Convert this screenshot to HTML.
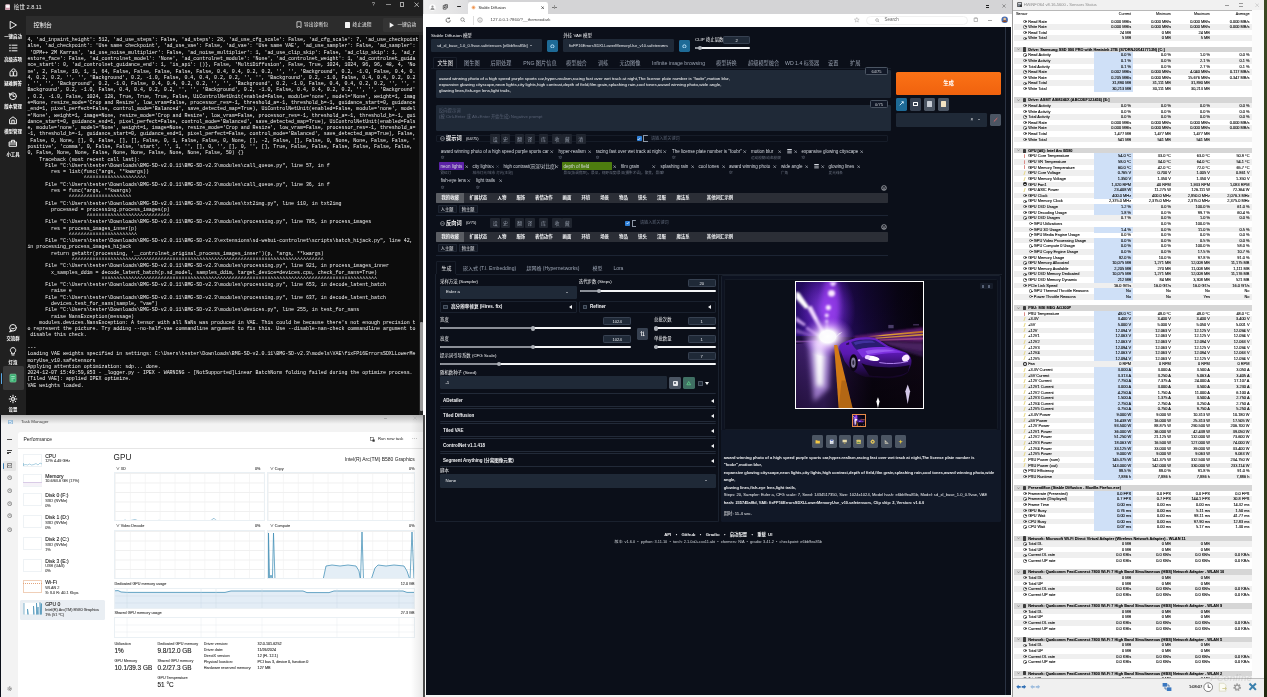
<!DOCTYPE html><html lang="zh"><head><meta charset="utf-8"><title>Desktop</title><style>
*{box-sizing:border-box;margin:0;padding:0}
html,body{width:1267px;height:697px;overflow:hidden;background:#0b0f19}
body{font-family:"Liberation Sans","Noto Sans CJK SC",sans-serif;position:relative;-webkit-font-smoothing:antialiased}
.abs,.abs>*{position:absolute}
#root{position:absolute;left:0;top:0;width:1267px;height:697px;overflow:hidden;will-change:transform;transform:translateZ(0)}
#root div,#root span,#root svg{position:absolute;white-space:nowrap}
.t{line-height:1}
/* launcher */
#lau{left:0;top:0;width:423.8px;height:414.5px;background:#202020;overflow:hidden}
#lau .tb{left:26px;top:16px;width:398px;height:18.7px;background:#2c2c2c}
#lau .con{left:26px;top:34.7px;width:393.4px;height:380px;background:#0c0c0c;overflow:hidden}
#lau pre{position:absolute;left:1.4px;top:2.5px;font-family:"Liberation Mono",monospace;font-size:4.95px;line-height:6.275px;color:#f4f4f4;white-space:pre;letter-spacing:0}
#lau .sl{font-size:4.4px;font-weight:bold;color:#fff;width:26px;left:0;text-align:center;line-height:5px}
#lau svg.si{left:8px;width:10px;height:10px}
/* task manager */
#tm{left:1px;top:414.5px;width:421.7px;height:283px;background:#f3f3f3;overflow:hidden;color:#1b1b1b}
#tm .pane{left:16.5px;top:17.5px;width:406px;height:270px;background:#fff;border-radius:3px 0 0 0}
#tm .it{font-size:5.05px;line-height:6px;color:#222;-webkit-text-stroke:0.1px #222}
#tm .is{font-size:3.85px;line-height:5px;color:#4a4a4a;-webkit-text-stroke:0.1px #4a4a4a}
#tm .gl{font-size:3.75px;line-height:5px;color:#444;-webkit-text-stroke:0.1px #444}
#tm .gbox{border:0.6px solid #eaf0f4;background:#fff;overflow:hidden}
/* browser */
#br{left:423px;top:0;width:589.5px;height:697px;background:#fff;overflow:hidden}
#pg{left:3px;top:26.7px;width:584.5px;height:668px;background:#0b0f19;overflow:hidden;color:#e5e7eb;font-size:4.6px}
#pg .blk{background:#1f2937;border-radius:1.2px}
#pg .lbl{font-size:4.4px;line-height:5px;color:#f3f4f6}
#pg .num{background:#1f2937;border-radius:1.2px;height:8px;font-size:4.2px;line-height:8px;text-align:center;color:#e5e7eb;border:0.4px solid #374151}
#pg .trk{height:2px;border-radius:1px;background:#f3f4f6}
#pg .trk i{position:absolute;left:0;top:0;height:2px;background:#8b8f97;border-radius:1px}
#pg .knob{width:4.4px;height:4.4px;border-radius:2.2px;background:#aeb2b9}
#pg .acc{left:17px;width:276px;height:13.4px;border-top:0.5px solid #222a38;border-bottom:0.5px solid #222a38;border-radius:1px}
#pg .acc b{position:absolute;left:3px;top:4px;font-size:4.5px;line-height:5px;color:#f3f4f6}
#pg .acc i{position:absolute;right:2.2px;top:4.2px;width:0;height:0;border-top:2px solid transparent;border-bottom:2px solid transparent;border-right:3px solid #f3f4f6}
#pg .tab{font-size:5.2px;line-height:6px;color:#9aa3b2;top:60px}
#pg .tag{font-size:4.5px;line-height:5px;color:#d6dae1}
#pg .tsub{font-size:3.6px;line-height:4px;color:#6b7280}
#pg .cat{font-size:4.4px;line-height:9.5px;color:#f3f4f6;font-weight:bold;text-align:center;top:0;height:9.5px}
#pg .sb{background:#262b36;border-radius:1px;height:10px;top:0;width:9.5px}
#pg .gbtn{top:408.8px;width:11.3px;height:12.3px;background:#4b5563;border-radius:1.4px}
/* hwinfo */
#hw{left:1012.3px;top:0;width:251.5px;height:697px;background:#fff;overflow:hidden;color:#000;font-size:3.92px;-webkit-text-stroke:0.09px #000}
#hw .row{left:1.3px;width:238.2px;height:5.62px}
#hw .row span{top:0;line-height:5.62px;height:5.62px}
#hw .row .n{left:14.6px}
#hw .row .v{text-align:right;width:40px}
#hw .g{background:#d6d6d6;font-weight:bold;font-size:3.87px;-webkit-text-stroke:0.08px #000}
#hw .o{background:#efefef}
#hw .hl{left:80.7px;top:0;width:38.4px;height:6.3px;background:#cfe0f7}
#hw .ic{left:9.8px;top:1.1px;width:3.3px;height:3.3px;border:0.55px solid #666;border-radius:50%}
#hw .ic:after{content:"";position:absolute;left:1.1px;top:0.2px;width:1.6px;height:0.5px;background:#444}
</style></head><body><div id="root"><div id="lau"><svg style="left:4.6px;top:3.6px;width:5.4px;height:6.6px" viewBox="0 0 10 12"><rect x="0.5" y="0.5" width="9" height="11" rx="2" fill="#e9c9d2"/><rect x="2" y="2.2" width="6" height="4" rx="1" fill="#fff"/><rect x="1" y="7.5" width="8" height="3" fill="#c98fa2"/></svg><span class="t" style="left:13.8px;top:5px;font-size:5.6px;color:#f0f0f0">绘世 2.8.11</span><span class="t" style="left:372px;top:1.8px;font-size:5.2px;color:#cfcfcf">?</span><div style="left:385.5px;top:4.4px;width:5px;height:0.6px;background:#8a8a8a"></div><div style="left:400px;top:2.4px;width:4.4px;height:4.4px;border:0.6px solid #a8a8a8"></div><svg style="left:414px;top:2px;width:5.4px;height:5.4px" viewBox="0 0 10 10"><path d="M1 1L9 9M9 1L1 9" stroke="#e8e8e8" stroke-width="1.3"/></svg><svg class="si" style="top:19.6px" viewBox="0 0 10 10"><path d="M2.5 1.5 L8.5 5 L2.5 8.5 Z" stroke="#f2f2f2" fill="none" stroke-width="1" stroke-linecap="round" stroke-linejoin="round"/></svg><span class="sl" style="top:33.7px">一键启动</span><svg class="si" style="top:43.2px" viewBox="0 0 10 10"><path d="M1.5 2.2h1M4 2.2h5M1.5 5h1M4 5h5M1.5 7.8h1M4 7.8h5" stroke="#f2f2f2" fill="none" stroke-width="1" stroke-linecap="round" stroke-linejoin="round" stroke-width="1.2"/></svg><span class="sl" style="top:56.7px">高级选项</span><svg class="si" style="top:67.0px" viewBox="0 0 10 10"><path d="M2 8.5V5.5a1.6 1.6 0 0 1 3.2 0V8.5ZM5.6 8.5V5.5a1.6 1.6 0 0 1 3.2 0V8.5ZM3.5 3.3A2.2 2.2 0 0 1 7.5 3" stroke="#f2f2f2" fill="none" stroke-width="1" stroke-linecap="round" stroke-linejoin="round"/></svg><span class="sl" style="top:80.5px">疑难解答</span><svg class="si" style="top:90.6px" viewBox="0 0 10 10"><circle cx="5" cy="5.2" r="3.4" stroke="#f2f2f2" fill="none" stroke-width="1" stroke-linecap="round" stroke-linejoin="round"/><path d="M5 3.3V5.4H6.6M1.3 2.2L1.9 4.2L3.8 3.6" stroke="#f2f2f2" fill="none" stroke-width="1" stroke-linecap="round" stroke-linejoin="round"/></svg><span class="sl" style="top:104.3px">版本管理</span><svg class="si" style="top:114.6px" viewBox="0 0 10 10"><path d="M1.6 8.3V4.4L5 1.8L8.4 4.4V8.3ZM3.8 8.3V5.2H6.2V8.3" stroke="#f2f2f2" fill="none" stroke-width="1" stroke-linecap="round" stroke-linejoin="round"/></svg><span class="sl" style="top:128.5px">模型管理</span><svg class="si" style="top:138.0px" viewBox="0 0 10 10"><path d="M1.5 4h7v4.3h-7ZM3.5 4V2.3h3V4M1.5 6h7" stroke="#f2f2f2" fill="none" stroke-width="1" stroke-linecap="round" stroke-linejoin="round"/></svg><span class="sl" style="top:152.1px">小工具</span><svg class="si" style="top:322.5px" viewBox="0 0 10 10"><circle cx="5" cy="4.8" r="3.3" stroke="#f2f2f2" fill="none" stroke-width="1" stroke-linecap="round" stroke-linejoin="round"/><path d="M2.6 7.2L1.6 9L4 8" stroke="#f2f2f2" fill="none" stroke-width="1" stroke-linecap="round" stroke-linejoin="round"/><path d="M3.6 5.4q1.4 1.2 2.8 0" stroke="#f2f2f2" fill="none" stroke-width="1" stroke-linecap="round" stroke-linejoin="round" stroke-width="0.8"/></svg><span class="sl" style="top:335.6px">交流群</span><svg class="si" style="top:346.0px" viewBox="0 0 10 10"><path d="M3.6 6.6A2.7 2.7 0 1 1 6.4 6.6V7.8H3.6ZM4 9h2" stroke="#f2f2f2" fill="none" stroke-width="1" stroke-linecap="round" stroke-linejoin="round"/></svg><span class="sl" style="top:359.6px">灯泡</span><div style="left:2.6px;top:366px;width:21.4px;height:24px;background:#3a3a3a;border-radius:1.6px"></div><div style="left:0.8px;top:372.5px;width:1.1px;height:11px;background:#5aa9e6;border-radius:1px"></div><svg class="si" style="top:372.6px" viewBox="0 0 10 10"><rect x="2" y="1.2" width="6" height="7.8" rx="0.8" fill="#2fa86a" stroke="#7fe0a8" stroke-width="0.7"/><path d="M3.2 3.4h3.6M3.2 5.2h3.6M3.2 7h2.2" stroke="#d8ffe9" stroke-width="0.7"/></svg><svg class="si" style="top:394.0px" viewBox="0 0 10 10"><circle cx="5" cy="5" r="1.5" stroke="#f2f2f2" fill="none" stroke-width="1" stroke-linecap="round" stroke-linejoin="round"/><path d="M5 1.2V2.4M5 7.6V8.8M1.2 5H2.4M7.6 5H8.8M2.3 2.3L3.2 3.2M6.8 6.8L7.7 7.7M7.7 2.3L6.8 3.2M3.2 6.8L2.3 7.7" stroke="#f2f2f2" fill="none" stroke-width="1" stroke-linecap="round" stroke-linejoin="round" stroke-width="1.3"/></svg><span class="sl" style="top:407.2px">设置</span><div class="tb"><span class="t" style="left:7.5px;top:5.6px;font-size:6.2px;color:#f5f5f5">控制台</span><svg style="left:270px;top:5px;width:6px;height:7.4px" viewBox="0 0 8 10"><path d="M1.2 1h5.6v8L4 7.2L1.2 9Z" fill="none" stroke="#eee" stroke-width="1"/></svg><span class="t" style="left:278px;top:6.5px;font-size:4.8px;color:#f0f0f0">导出诊断包</span><div style="left:318.6px;top:6.3px;width:5.2px;height:5.6px;background:#f3f3f3;border-radius:0.5px"></div><span class="t" style="left:326.4px;top:6.5px;font-size:4.8px;color:#f0f0f0">终止进程</span><div style="left:357px;top:2.2px;width:40px;height:14px;background:#343434;border-radius:1.4px"></div><svg style="left:362.6px;top:6px;width:5.6px;height:6.4px" viewBox="0 0 8 9"><path d="M1 0.8L7.2 4.5L1 8.2Z" fill="#f3f3f3"/></svg><span class="t" style="left:371.4px;top:6.5px;font-size:4.7px;color:#f0f0f0">一键启动</span></div><div class="con"><pre>4, 'ad_inpaint_height': 512, 'ad_use_steps': False, 'ad_steps': 28, 'ad_use_cfg_scale': False, 'ad_cfg_scale': 7, 'ad_use_checkpoint': F
alse, 'ad_checkpoint': 'Use same checkpoint', 'ad_use_vae': False, 'ad_vae': 'Use same VAE', 'ad_use_sampler': False, 'ad_sampler':
 'DPM++ 2M Karras', 'ad_use_noise_multiplier': False, 'ad_noise_multiplier': 1, 'ad_use_clip_skip': False, 'ad_clip_skip': 1, 'ad_r
estore_face': False, 'ad_controlnet_model': 'None', 'ad_controlnet_module': 'None', 'ad_controlnet_weight': 1, 'ad_controlnet_guida
nce_start': 0, 'ad_controlnet_guidance_end': 1, 'is_api': ()}, False, 'MultiDiffusion', False, True, 1024, 1024, 96, 96, 48, 4, 'No
ne', 2, False, 10, 1, 1, 64, False, False, False, False, False, 0.4, 0.4, 0.2, 0.2, '', '', 'Background', 0.2, -1.0, False, 0.4, 0.
4, 0.2, 0.2, '', '', 'Background', 0.2, -1.0, False, 0.4, 0.4, 0.2, 0.2, '', '', 'Background', 0.2, -1.0, False, 0.4, 0.4, 0.2, 0.2
, '', '', 'Background', 0.2, -1.0, False, 0.4, 0.4, 0.2, 0.2, '', '', 'Background', 0.2, -1.0, False, 0.4, 0.4, 0.2, 0.2, '', '', '
Background', 0.2, -1.0, False, 0.4, 0.4, 0.2, 0.2, '', '', 'Background', 0.2, -1.0, False, 0.4, 0.4, 0.2, 0.2, '', '', 'Background'
, 0.2, -1.0, False, 1024, 128, True, True, True, False, UiControlNetUnit(enabled=False, module='none', model='None', weight=1, imag
e=None, resize_mode='Crop and Resize', low_vram=False, processor_res=-1, threshold_a=-1, threshold_b=-1, guidance_start=0, guidance
_end=1, pixel_perfect=False, control_mode='Balanced', save_detected_map=True), UiControlNetUnit(enabled=False, module='none', model
='None', weight=1, image=None, resize_mode='Crop and Resize', low_vram=False, processor_res=-1, threshold_a=-1, threshold_b=-1, gui
dance_start=0, guidance_end=1, pixel_perfect=False, control_mode='Balanced', save_detected_map=True), UiControlNetUnit(enabled=Fals
e, module='none', model='None', weight=1, image=None, resize_mode='Crop and Resize', low_vram=False, processor_res=-1, threshold_a=
-1, threshold_b=-1, guidance_start=0, guidance_end=1, pixel_perfect=False, control_mode='Balanced', save_detected_map=True), False,
 False, 0, None, [], 0, False, [], [], False, 0, 1, False, False, 0, None, [], -2, False, [], False, 0, None, None, False, False, '
positive', 'comma', 0, False, False, 'start', '', 1, '', [], 0, '', [], 0, '', [], True, False, False, False, False, False, False,
0, False, None, None, False, None, None, False, None, None, False, 50) {}
    Traceback (most recent call last):
      File "C:\Users\tester\Downloads\BMG-SD-v2.0.11\BMG-SD-v2.3\modules\call_queue.py", line 57, in f
        res = list(func(*args, **kwargs))
                   ^^^^^^^^^^^^^^^^^^^^^
      File "C:\Users\tester\Downloads\BMG-SD-v2.0.11\BMG-SD-v2.3\modules\call_queue.py", line 36, in f
        res = func(*args, **kwargs)
              ^^^^^^^^^^^^^^^^^^^^^
      File "C:\Users\tester\Downloads\BMG-SD-v2.0.11\BMG-SD-v2.3\modules\txt2img.py", line 110, in txt2img
        processed = processing.process_images(p)
                    ^^^^^^^^^^^^^^^^^^^^^^^^^^^^
      File "C:\Users\tester\Downloads\BMG-SD-v2.0.11\BMG-SD-v2.3\modules\processing.py", line 785, in process_images
        res = process_images_inner(p)
              ^^^^^^^^^^^^^^^^^^^^^^^
      File "C:\Users\tester\Downloads\BMG-SD-v2.0.11\BMG-SD-v2.3\extensions\sd-webui-controlnet\scripts\batch_hijack.py", line 42,
in processing_process_images_hijack
        return getattr(processing, '__controlnet_original_process_images_inner')(p, *args, **kwargs)
               ^^^^^^^^^^^^^^^^^^^^^^^^^^^^^^^^^^^^^^^^^^^^^^^^^^^^^^^^^^^^^^^^^^^^^^^^^^^^^^^^^^^^^
      File "C:\Users\tester\Downloads\BMG-SD-v2.0.11\BMG-SD-v2.3\modules\processing.py", line 921, in process_images_inner
        x_samples_ddim = decode_latent_batch(p.sd_model, samples_ddim, target_device=devices.cpu, check_for_nans=True)
                         ^^^^^^^^^^^^^^^^^^^^^^^^^^^^^^^^^^^^^^^^^^^^^^^^^^^^^^^^^^^^^^^^^^^^^^^^^^^^^^^^^^^^^^^^^^^^^
      File "C:\Users\tester\Downloads\BMG-SD-v2.0.11\BMG-SD-v2.3\modules\processing.py", line 653, in decode_latent_batch
        raise e
      File "C:\Users\tester\Downloads\BMG-SD-v2.0.11\BMG-SD-v2.3\modules\processing.py", line 637, in decode_latent_batch
        devices.test_for_nans(sample, "vae")
      File "C:\Users\tester\Downloads\BMG-SD-v2.0.11\BMG-SD-v2.3\modules\devices.py", line 255, in test_for_nans
        raise NansException(message)
    modules.devices.NansException: A tensor with all NaNs was produced in VAE. This could be because there's not enough precision t
o represent the picture. Try adding --no-half-vae commandline argument to fix this. Use --disable-nan-check commandline argument to
 disable this check.

---
Loading VAE weights specified in settings: C:\Users\tester\Downloads\BMG-SD-v2.0.11\BMG-SD-v2.3\models\VAE\fixFP16ErrorsSDXLLowerMe
moryUse_v10.safetensors
Applying attention optimization: sdp... done.
2024-12-07 15:49:59,853 - _logger.py - IPEX - WARNING - [NotSupported]Linear BatchNorm folding failed during the optimize process.
[Tiled VAE]: applied IPEX optimize.
VAE weights loaded.</pre></div><div style="left:419.4px;top:34.7px;width:4.4px;height:380px;background:#222"></div><div style="left:420.4px;top:322px;width:2.6px;height:89px;background:#9a9a9a;border-radius:1px"></div></div><div id="tm"><div class="pane"></div><div style="left:0;top:0;width:422px;height:9px;background:linear-gradient(#b9b9b9,rgba(240,240,240,0))"></div><svg style="left:6.5px;top:5.0px;width:5px;height:4.4px" viewBox="0 0 10 9"><rect x="0.5" y="0.5" width="9" height="8" rx="1" fill="#d9e9f7" stroke="#3b7fb5" stroke-width="1"/><path d="M1.5 6L3.5 4L5 5.5L8 2.5" stroke="#3b7fb5" fill="none" stroke-width="1"/></svg><span class="t " style="left:20.0px;top:5.5px;font-size:4.4px;color:#444">Task Manager</span><div style="left:382.6px;top:3.9px;width:3.6px;height:0.5px;background:#aaa"></div><svg style="left:412.4px;top:1.9px;width:4px;height:4px" viewBox="0 0 10 10"><path d="M1 1L9 9M9 1L1 9" stroke="#aaa" stroke-width="1"/></svg><div style="left:6.0px;top:24.0px;width:4.6px;height:0.6px;background:#555"></div><div style="left:6.0px;top:35.4px;width:4.6px;height:0.6px;background:#444"></div><div style="left:6.0px;top:37.0px;width:3.6px;height:0.6px;background:#444"></div><div style="left:6.0px;top:38.6px;width:2.4px;height:0.6px;background:#444"></div><div style="left:2.0px;top:46.5px;width:13.0px;height:10.0px;background:#e6e6e6;border-radius:1.5px"></div><div style="left:2.0px;top:48.5px;width:0.9px;height:5.5px;background:#3b7fb5;border-radius:1px"></div><svg style="left:6.0px;top:48.5px;width:5.4px;height:5.4px" viewBox="0 0 10 10"><path d="M1 1h8v8h-8zM1 6.5L3.5 4L5.5 6L9 2.5" fill="none" stroke="#333" stroke-width="1"/></svg><svg style="left:5.8px;top:60.3px;width:5.4px;height:5.4px" viewBox="0 0 10 10"><circle cx="5" cy="5" r="3.6" fill="none" stroke="#444" stroke-width="1"/><path d="M5 3v2.2h1.6" fill="none" stroke="#444" stroke-width="0.9"/></svg><svg style="left:5.8px;top:73.3px;width:5.4px;height:5.4px" viewBox="0 0 10 10"><circle cx="5" cy="5" r="3.6" fill="none" stroke="#444" stroke-width="1"/><path d="M5 3v2.2h1.6" fill="none" stroke="#444" stroke-width="0.9"/></svg><svg style="left:5.8px;top:86.3px;width:5.4px;height:5.4px" viewBox="0 0 10 10"><circle cx="5" cy="5" r="3.6" fill="none" stroke="#444" stroke-width="1"/><path d="M5 3v2.2h1.6" fill="none" stroke="#444" stroke-width="0.9"/></svg><svg style="left:5.8px;top:98.3px;width:5.4px;height:5.4px" viewBox="0 0 10 10"><circle cx="5" cy="5" r="3.6" fill="none" stroke="#444" stroke-width="1"/><path d="M5 3v2.2h1.6" fill="none" stroke="#444" stroke-width="0.9"/></svg><svg style="left:5.8px;top:112.3px;width:5.4px;height:5.4px" viewBox="0 0 10 10"><circle cx="5" cy="5" r="3.6" fill="none" stroke="#444" stroke-width="1"/><path d="M5 3v2.2h1.6" fill="none" stroke="#444" stroke-width="0.9"/></svg><svg style="left:5.5px;top:271.0px;width:5.4px;height:5.4px" viewBox="0 0 10 10"><circle cx="5" cy="5" r="1.6" fill="none" stroke="#444" stroke-width="1"/><circle cx="5" cy="5" r="3.6" fill="none" stroke="#444" stroke-width="1.1" stroke-dasharray="1.6 1.2"/></svg><span class="t " style="left:22.5px;top:22.5px;font-size:5px;color:#1a1a1a">Performance</span><div style="left:17.0px;top:33.0px;width:405.0px;height:0.5px;background:#e6e6e6"></div><svg style="left:369.0px;top:22.3px;width:5px;height:5px" viewBox="0 0 10 10"><rect x="1" y="1" width="6" height="6" fill="none" stroke="#333" stroke-width="1"/><rect x="5" y="5" width="4.4" height="4.4" fill="#333"/></svg><span class="t " style="left:377.0px;top:22.9px;font-size:4.2px;color:#222">Run new task</span><span class="t " style="left:411.0px;top:21.1px;font-size:5px;color:#222;letter-spacing:0.2px">···</span><div style="left:21.5px;top:39.3px;width:19.5px;height:13.0px;border:0.5px solid #eef2f5;background:#fff"></div><svg style="left:21.5px;top:39.3px;width:19.5px;height:13px" viewBox="0 0 39 26"><path d="M1 18V24M1 22L6 21L9 22L13 20L17 22L22 21L26 19L30 22L34 18L38 20" fill="none" stroke="#4a9ac0" stroke-width="0.9"/></svg><span class="t it" style="left:44.2px;top:38.5px;">CPU</span><span class="t is" style="left:44.2px;top:44.7px;">12% 4.49 GHz</span><div style="left:21.5px;top:59.0px;width:19.5px;height:13.0px;border:0.5px solid #eef2f5;background:#fff"></div><div style="left:21.7px;top:67.2px;width:19.0px;height:4.6px;background:#f5f1f8"></div><div style="left:21.7px;top:67.0px;width:19.0px;height:0.5px;background:#d9cbe6"></div><span class="t it" style="left:44.2px;top:58.2px;">Memory</span><span class="t is" style="left:44.2px;top:64.4px;">10.6/63.6 GB (17%)</span><div style="left:21.5px;top:78.7px;width:19.5px;height:13.0px;border:0.5px solid #eef2f5;background:#fff"></div><span class="t it" style="left:44.2px;top:77.9px;">Disk 0 (F:)</span><span class="t is" style="left:44.2px;top:84.1px;">SSD (NVMe)</span><span class="t is" style="left:44.2px;top:89.5px;">0%</span><div style="left:21.5px;top:100.6px;width:19.5px;height:13.0px;border:0.5px solid #eef2f5;background:#fff"></div><span class="t it" style="left:44.2px;top:99.8px;">Disk 1 (D:)</span><span class="t is" style="left:44.2px;top:106.0px;">SSD (NVMe)</span><span class="t is" style="left:44.2px;top:111.4px;">0%</span><div style="left:21.5px;top:122.6px;width:19.5px;height:13.0px;border:0.5px solid #eef2f5;background:#fff"></div><span class="t it" style="left:44.2px;top:121.8px;">Disk 2 (C:)</span><span class="t is" style="left:44.2px;top:128.0px;">SSD (NVMe)</span><span class="t is" style="left:44.2px;top:133.4px;">1%</span><div style="left:21.5px;top:144.1px;width:19.5px;height:13.0px;border:0.5px solid #eef2f5;background:#fff"></div><span class="t it" style="left:44.2px;top:143.3px;">Disk 3 (E:)</span><span class="t is" style="left:44.2px;top:149.5px;">USB (UAS)</span><span class="t is" style="left:44.2px;top:154.9px;">0%</span><div style="left:21.5px;top:165.7px;width:19.5px;height:13.0px;border:0.5px solid #f0cfb8;background:#fff"></div><div style="left:22.0px;top:168.7px;width:18.5px;height:0.5px;background:repeating-linear-gradient(90deg,#e2a47c 0 1px,transparent 1px 2px)"></div><span class="t it" style="left:44.2px;top:164.9px;">Wi-Fi</span><span class="t is" style="left:44.2px;top:171.1px;">WLAN 2</span><span class="t is" style="left:44.2px;top:176.5px;">S: 8.0 R: 40.1 Kbps</span><div style="left:19.0px;top:185.1px;width:84.5px;height:20.0px;background:#e9eef3;border-radius:1.5px"></div><div style="left:21.5px;top:187.7px;width:19.5px;height:13.0px;border:0.5px solid #eef2f5;background:#fff"></div><svg style="left:21.5px;top:187.7px;width:19.5px;height:13px" viewBox="0 0 39 26"><path d="M2 25V2M9 25V14L11 25M21 25V8L22.5 25M27 25V2L28.5 25L30 10L31 25M34 25V1L35.5 25L37 3V25" fill="none" stroke="#3f8db5" stroke-width="1.3"/></svg><span class="t it" style="left:44.2px;top:186.9px;">GPU 0</span><span class="t is" style="left:44.2px;top:193.1px;">Intel(R) Arc(TM) B580 Graphics</span><span class="t is" style="left:44.2px;top:198.5px;">1% (51 °C)</span><span class="t " style="left:112.6px;top:39.1px;font-size:8.2px;color:#1a1a1a">GPU</span><span class="t" style="right:7.9px;top:42.5px;font-size:5px;color:#1a1a1a">Intel(R) Arc(TM) B580 Graphics</span><span class="t gl" style="left:115.0px;top:52.1px;">∨ 3D</span><span class="t gl" style="left:254.0px;top:52.1px;">0%</span><span class="t gl" style="left:269.0px;top:52.1px;">∨ Copy</span><span class="t gl" style="right:8.2px;top:52.1px">0%</span><div class="gbox" style="left:113.0px;top:57.7px;width:150.6px;height:49.3px;background-image:linear-gradient(#f0f0f0 0.5px,transparent 0.5px),linear-gradient(90deg,#f6f6f6 0.5px,transparent 0.5px);background-size:14.9px 9.5px,14.9px 9.5px;"><svg style="left:0;top:0;width:150px;height:49px" viewBox="0 0 150 49"><path d="M8 48L10 47L13 48L20 46.6L24 48L40 48L44 47.3L48 48L58 47.6L92 48L96 47.4L99 45.2L101 47.3L104 48" fill="none" stroke="#5b9dc0" stroke-width="0.6"/></svg></div><div class="gbox" style="left:266.0px;top:57.7px;width:148.0px;height:49.3px;background-image:linear-gradient(#f0f0f0 0.5px,transparent 0.5px),linear-gradient(90deg,#f6f6f6 0.5px,transparent 0.5px);background-size:14.9px 9.5px,14.9px 9.5px;"><svg style="left:0;top:0;width:148px;height:49px" viewBox="0 0 148 49"><path d="M16 48h4M54 48h6M104 48h5" fill="none" stroke="#5b9dc0" stroke-width="0.7"/></svg></div><span class="t gl" style="left:115.0px;top:109.1px;">∨ Video Decode</span><span class="t gl" style="left:254.0px;top:109.1px;">0%</span><span class="t gl" style="left:269.0px;top:109.1px;">∨ Compute</span><span class="t gl" style="right:8.2px;top:109.1px">0%</span><div class="gbox" style="left:113.0px;top:115.1px;width:150.6px;height:49.3px;background-image:linear-gradient(#f0f0f0 0.5px,transparent 0.5px),linear-gradient(90deg,#f6f6f6 0.5px,transparent 0.5px);background-size:14.9px 9.5px,14.9px 9.5px;"></div><div class="gbox" style="left:266.0px;top:115.1px;width:148.0px;height:49.3px;background-image:linear-gradient(#f0f0f0 0.5px,transparent 0.5px),linear-gradient(90deg,#f6f6f6 0.5px,transparent 0.5px);background-size:14.9px 9.5px,14.9px 9.5px;"><svg style="left:0;top:0;width:148px;height:49px" viewBox="0 0 148 49"><path d="M55 49L58 35L64 34L72 35L80 34L88 35L91 40L93 49ZM103 49L107 37L110 34L118 35L126 34L136 35L139 40L142 49Z" fill="#e4eef6"/><path d="M0.5 49V2L1.6 49L3 44L4.4 49L5.5 2L7 49M55 49L58 35L64 34L72 35L80 34L88 35L91 40L92.5 49L94 1L95.5 49M103 49L107 37L110 34L118 35L126 34L136 35L139 40L142 49L144 1L146 49" fill="none" stroke="#3f8db5" stroke-width="0.75"/></svg></div><span class="t gl" style="left:113.5px;top:167.5px;">Dedicated GPU memory usage</span><span class="t gl" style="right:8.2px;top:167.5px">12.0 GB</span><div class="gbox" style="left:113.0px;top:173.5px;width:301.0px;height:20.6px;"><svg style="left:0;top:0;width:301px;height:20.6px" viewBox="0 0 301 20.6"><path d="M0 20.6V1.8L3 1.6L6 3L12 3.4L60 3.4L110 3.4L116 2L188 2L192 3.6L214 3.6L219 2L288 2L292 3.4L301 3.4V20.6Z" fill="#e3edf6"/><path d="M0 1.8L3 1.6L6 3L12 3.4L60 3.4L110 3.4L116 2L188 2L192 3.6L214 3.6L219 2L288 2L292 3.4L301 3.4" fill="none" stroke="#3f8db5" stroke-width="0.8"/><path d="M12 0V20.6M86 0V20.6M101 0V20.6M147 0V20.6M222 0V20.6M284 0V20.6M0 7h301M0 14h301" stroke="#c9d9e6" stroke-width="0.4"/></svg></div><span class="t gl" style="left:113.5px;top:196.5px;">Shared GPU memory usage</span><span class="t gl" style="right:8.2px;top:196.5px">27.3 GB</span><div class="gbox" style="left:113.0px;top:202.0px;width:301.0px;height:21.7px;"><svg style="left:0;top:0;width:301px;height:21.6px" viewBox="0 0 301 21.6"><path d="M12 0V21.6M86 0V21.6M101 0V21.6M147 0V21.6M222 0V21.6M284 0V21.6M0 7h301M0 14h301" stroke="#e3e9ee" stroke-width="0.4"/><path d="M2 20.8h8M184 20.8h10M286 20.8h8" stroke="#5b9dc0" stroke-width="0.6"/></svg></div><span class="t gl" style="left:113.5px;top:227.7px;">Utilization</span><span class="t " style="left:113.5px;top:233.1px;font-size:6.4px;color:#1a1a1a;-webkit-text-stroke:0.12px #1a1a1a">1%</span><span class="t gl" style="left:156.5px;top:227.7px;">Dedicated GPU memory</span><span class="t " style="left:156.5px;top:233.1px;font-size:6.4px;color:#1a1a1a;-webkit-text-stroke:0.12px #1a1a1a">9.8/12.0 GB</span><span class="t gl" style="left:113.5px;top:244.7px;">GPU Memory</span><span class="t " style="left:113.5px;top:250.1px;font-size:6.4px;color:#1a1a1a;-webkit-text-stroke:0.12px #1a1a1a">10.1/39.3 GB</span><span class="t gl" style="left:156.5px;top:244.7px;">Shared GPU memory</span><span class="t " style="left:156.5px;top:250.1px;font-size:6.4px;color:#1a1a1a;-webkit-text-stroke:0.12px #1a1a1a">0.2/27.3 GB</span><span class="t gl" style="left:156.5px;top:261.7px;">GPU Temperature</span><span class="t " style="left:156.5px;top:267.1px;font-size:6.4px;color:#1a1a1a;-webkit-text-stroke:0.12px #1a1a1a">51 °C</span><span class="t gl" style="left:202.8px;top:227.7px;">Driver version:</span><span class="t gl" style="left:256.6px;top:227.7px;color:#1a1a1a">32.0.101.6252</span><span class="t gl" style="left:202.8px;top:233.8px;">Driver date:</span><span class="t gl" style="left:256.6px;top:233.8px;color:#1a1a1a">11/26/2024</span><span class="t gl" style="left:202.8px;top:239.8px;">DirectX version:</span><span class="t gl" style="left:256.6px;top:239.8px;color:#1a1a1a">12 (FL 12.1)</span><span class="t gl" style="left:202.8px;top:245.9px;">Physical location:</span><span class="t gl" style="left:256.6px;top:245.9px;color:#1a1a1a">PCI bus 3, device 0, function 0</span><span class="t gl" style="left:202.8px;top:251.9px;">Hardware reserved memory:</span><span class="t gl" style="left:256.6px;top:251.9px;color:#1a1a1a">127 MB</span><div style="left:410px;top:0;width:12px;height:283px;background:linear-gradient(90deg,rgba(0,0,0,0),rgba(0,0,0,0.09))"></div></div><div id="br"><div style="left:0.0px;top:0.0px;width:590.0px;height:13.6px;background:#d4d4d6"></div><div style="left:0.8px;top:0.0px;width:44.4px;height:13.6px;background:linear-gradient(90deg,#efefef,#dedee0)"></div><svg style="left:5.6px;top:3.6px;width:7px;height:7px" viewBox="0 0 10 10"><circle cx="5" cy="5" r="4.6" fill="#fff"/><circle cx="5" cy="3.8" r="1.6" fill="#9a9a9a"/><path d="M2 8.4a3 3 0 0 1 6 0Z" fill="#9a9a9a"/></svg><svg style="left:18.6px;top:4px;width:6.4px;height:6.4px" viewBox="0 0 10 10"><path d="M2 2.5h4.5v5.5H2zM4 1h4.5v5.5" fill="none" stroke="#333" stroke-width="1.1"/><circle cx="4.3" cy="5.2" r="1.2" fill="#333"/></svg><div style="left:34.0px;top:5.6px;width:4.4px;height:1.4px;background:#222;border-radius:0.6px"></div><div style="left:45.0px;top:1.8px;width:80.0px;height:11.8px;background:#fff;border-radius:2.4px 2.4px 0 0"></div><svg style="left:48.0px;top:5px;width:5px;height:5px" viewBox="0 0 10 10"><circle cx="5" cy="5" r="4" fill="#f6c9a8"/><circle cx="5" cy="5" r="2" fill="#f08a3c"/></svg><span class="t" style="left:55.6px;top:5.6px;font-size:3.9px;color:#222">Stable Diffusion</span><svg style="left:117.6px;top:6px;width:3.4px;height:3.4px" viewBox="0 0 10 10"><path d="M1 1L9 9M9 1L1 9" stroke="#222" stroke-width="1.8"/></svg><div style="left:129.0px;top:7.0px;width:4.6px;height:0.6px;background:#777"></div><div style="left:130.9px;top:4.9px;width:0.6px;height:4.6px;background:#999"></div><div style="left:562.6px;top:4.6px;width:3.6px;height:0.8px;background:#222"></div><div style="left:562.6px;top:6.6px;width:3.6px;height:0.8px;background:#222"></div><svg style="left:579.0px;top:4.4px;width:4px;height:4px" viewBox="0 0 10 10"><path d="M1 1L9 9M9 1L1 9" stroke="#555" stroke-width="1.3"/></svg><div style="left:1.3px;top:13.6px;width:588.0px;height:13.2px;background:#fff"></div><svg style="left:22.4px;top:16.6px;width:6.4px;height:6.4px" viewBox="0 0 10 10"><path d="M8.3 5A3.3 3.3 0 1 1 7 2.4M7 0.8V2.6H5.2" fill="none" stroke="#333" stroke-width="1"/></svg><svg style="left:37.0px;top:17.4px;width:5.6px;height:5.6px" viewBox="0 0 10 10"><circle cx="4.4" cy="4.4" r="3" fill="none" stroke="#555" stroke-width="1"/><path d="M6.6 6.6L9 9" stroke="#555" stroke-width="1.1"/></svg><div style="left:49.5px;top:15.6px;width:0.4px;height:9.0px;background:#ddd"></div><svg style="left:54.4px;top:17px;width:6px;height:6px" viewBox="0 0 10 10"><circle cx="5" cy="5" r="3.8" fill="none" stroke="#777" stroke-width="0.9"/><path d="M5 4.4V7.2M5 2.8V3.4" stroke="#777" stroke-width="1"/></svg><span class="t" style="left:67.6px;top:18px;font-size:4.3px;color:#444">127.0.0.1:7860/?__theme=dark</span><svg style="left:431.0px;top:17.4px;width:5.6px;height:5.6px" viewBox="0 0 10 10"><path d="M5 1L6.2 3.8L9.2 4L6.9 6L7.6 9L5 7.4L2.4 9L3.1 6L0.8 4L3.8 3.8Z" fill="none" stroke="#999" stroke-width="0.8"/></svg><div style="left:443.0px;top:15.6px;width:102.0px;height:9.6px;border:0.5px solid #f0f0f0;border-radius:5px;background:#fff"></div><svg style="left:452.0px;top:18px;width:4.6px;height:4.6px" viewBox="0 0 10 10"><circle cx="4.4" cy="4.4" r="3" fill="none" stroke="#777" stroke-width="1"/><path d="M6.6 6.6L9 9" stroke="#777" stroke-width="1.1"/></svg><span class="t" style="left:461.4px;top:18px;font-size:4.5px;color:#666">Search</span><svg style="left:550.0px;top:17.4px;width:5.6px;height:5.6px" viewBox="0 0 10 10"><path d="M2 2h6v6h-6zM4 0.8v2M6 0.8v2" fill="none" stroke="#777" stroke-width="0.9"/></svg><div style="left:565.0px;top:20.0px;width:4.4px;height:0.6px;background:#aaa"></div><svg style="left:577.6px;top:16.4px;width:7.4px;height:7.4px" viewBox="0 0 10 10"><circle cx="5" cy="5" r="4.4" fill="#4a6fb3"/><circle cx="5" cy="4" r="1.8" fill="#f1c38b"/><path d="M1.6 8a3.6 3.6 0 0 1 6.8 0Z" fill="#8f4b2a"/></svg><div style="left:587.4px;top:26.7px;width:2.2px;height:671.0px;background:#fff"></div><div style="left:0.0px;top:694.6px;width:590.0px;height:2.4px;background:#f4f4f4"></div><div style="left:0.0px;top:414.5px;width:1.5px;height:283.0px;background:#4a4a4a"></div><div id="pg"><div style="left:579.4px;top:0.0px;width:0.5px;height:668.0px;background:#2a3242"></div><span class="t lbl" style="left:5.0px;top:5.9px;">Stable Diffusion 模型</span><div class="blk" style="left:5.0px;top:12.8px;width:111.0px;height:12.2px;"></div><span class="t " style="left:11.0px;top:16.9px;font-size:4.05px;color:#e5e7eb">sd_xl_base_1.0_0.9vae.safetensors [e6bb9ea85b]</span><div style="left:104.4px;top:18.3px;width:0;height:0;border-left:1.3px solid transparent;border-right:1.3px solid transparent;border-top:1.7px solid #e5e7eb"></div><div style="left:121.0px;top:13.3px;width:11.4px;height:12.0px;background:#1e6a96;border-radius:1.4px"><svg style="left:3.4px;top:3.6px;width:4.8px;height:4.8px" viewBox="0 0 10 10"><circle cx="5" cy="5" r="3.3" fill="none" stroke="#bfe6ff" stroke-width="2"/></svg></div><span class="t lbl" style="left:137.4px;top:5.9px;">外挂 VAE 模型</span><div class="blk" style="left:137.3px;top:12.8px;width:110.3px;height:12.2px;"></div><span class="t " style="left:143.0px;top:16.9px;font-size:4.05px;color:#e5e7eb">fixFP16ErrorsSDXLLowerMemoryUse_v10.safetensors</span><div style="left:236.0px;top:18.3px;width:0;height:0;border-left:1.3px solid transparent;border-right:1.3px solid transparent;border-top:1.7px solid #e5e7eb"></div><div style="left:252.6px;top:13.3px;width:11.4px;height:12.0px;background:#1e6a96;border-radius:1.4px"><svg style="left:3.4px;top:3.6px;width:4.8px;height:4.8px" viewBox="0 0 10 10"><circle cx="5" cy="5" r="3.3" fill="none" stroke="#bfe6ff" stroke-width="2"/></svg></div><span class="t lbl" style="left:269.0px;top:9.9px;">CLIP 终止层数</span><div class="num" style="left:297.4px;top:8.9px;width:26.6px;height:8.0px;">2</div><div class="trk" style="left:269.0px;top:20.1px;width:55.0px;height:2.0px;"><i style="width:5.0px"></i></div><div class="knob" style="left:271.8px;top:18.9px;width:4.4px;height:4.4px;"></div><div style="left:6.6px;top:30.3px;width:24.6px;height:11.0px;border:0.5px solid #181e2a;border-bottom:none;border-radius:1.4px 1.4px 0 0"></div><div style="left:5.0px;top:41.1px;width:460.0px;height:0.5px;background:#161c28"></div><span class="t tab" style="left:11.4px;top:33.5px;top:33.5px;color:#f3f4f6;">文生图</span><span class="t tab" style="left:38.0px;top:33.5px;top:33.5px;">图生图</span><span class="t tab" style="left:64.6px;top:33.5px;top:33.5px;">后期处理</span><span class="t tab" style="left:97.2px;top:33.5px;top:33.5px;">PNG 图片信息</span><span class="t tab" style="left:140.0px;top:33.5px;top:33.5px;">模型融合</span><span class="t tab" style="left:172.0px;top:33.5px;top:33.5px;">训练</span><span class="t tab" style="left:193.6px;top:33.5px;top:33.5px;">无边图像</span><span class="t tab" style="left:226.0px;top:33.5px;top:33.5px;">Infinite image browsing</span><span class="t tab" style="left:290.0px;top:33.5px;top:33.5px;">模型转换</span><span class="t tab" style="left:322.0px;top:33.5px;top:33.5px;">超级模型融合</span><span class="t tab" style="left:359.0px;top:33.5px;top:33.5px;">WD 1.4 标签器</span><span class="t tab" style="left:402.0px;top:33.5px;top:33.5px;">设置</span><span class="t tab" style="left:424.0px;top:33.5px;top:33.5px;">扩展</span><div class="blk" style="left:9.5px;top:43.6px;width:455.0px;height:28.2px;"></div><span class="t " style="left:13.0px;top:49.9px;font-size:4.38px;color:#fff">award winning photo of a high speed purple sports car,hyper-realism,racing fast over wet track at night,The license plate number is "foobr",motion blur,</span><span class="t " style="left:13.0px;top:56.2px;font-size:4.38px;color:#fff">expansive glowing cityscape,neon lights,city lights,high contrast,depth of field,film grain,splashing rain,cool tones,award winning photo,wide angle,</span><span class="t " style="left:13.0px;top:62.5px;font-size:4.38px;color:#fff">glowing lines,fish-eye lens,light trails,</span><div style="left:439.0px;top:40.3px;width:23.0px;height:8.4px;background:#111827;border:0.5px solid #4b5563;border-radius:1.4px;font-size:4px;line-height:7.6px;text-align:center;color:#d1d5db">64/75</div><div class="blk" style="left:9.5px;top:78.3px;width:455.0px;height:26.4px;"></div><span class="t " style="left:13.0px;top:82.5px;font-size:4.3px;color:#586174">反向提示词</span><span class="t " style="left:13.0px;top:88.7px;font-size:4.3px;color:#586174">(按 Ctrl+Enter 或 Alt+Enter 开始生成) Negative prompt</span><div style="left:444.0px;top:73.3px;width:18.0px;height:8.4px;background:#111827;border:0.5px solid #4b5563;border-radius:1.4px;font-size:4px;line-height:7.6px;text-align:center;color:#d1d5db">0/75</div><div style="left:469.8px;top:45.0px;width:105.5px;height:23.0px;background:linear-gradient(#fb7216,#f0620e);border-radius:1.6px;color:#fff;font-size:5.4px;line-height:23px;text-align:center;font-weight:bold">生成</div><div style="left:470.0px;top:71.6px;width:11.0px;height:12.3px;background:#1e6a96;border-radius:1.4px"><svg style="left:3px;top:3px;width:5px;height:5px" viewBox="0 0 10 10"><path d="M1.5 8.5L8.5 1.5M5 1.5h3.5V5" stroke="#dff3ff" stroke-width="1.8" fill="none"/></svg></div><div style="left:484.0px;top:71.6px;width:11.0px;height:12.3px;background:#374151;border-radius:1.4px"><div style="left:3.2px;top:3.4px;width:4.6px;height:4.6px;border:0.8px solid #fff;border-radius:0.6px"></div></div><div style="left:498.0px;top:71.6px;width:11.0px;height:12.3px;background:#4b5563;border-radius:1.4px"><div style="left:3.4px;top:3px;width:4.4px;height:5.6px;background:#c9ced6;border-radius:0.5px"></div></div><div style="left:512.0px;top:71.6px;width:11.0px;height:12.3px;background:#4b5563;border-radius:1.4px"><div style="left:3.4px;top:3px;width:4.4px;height:5.6px;background:#f3e3c2;border-radius:0.5px"></div></div><div class="blk" style="left:470.0px;top:86.3px;width:91.0px;height:13.6px;"></div><span class="t " style="left:544.6px;top:90.9px;font-size:4.6px;color:#e5e7eb">×</span><div style="left:551.6px;top:92.7px;width:0;height:0;border-left:1.3px solid transparent;border-right:1.3px solid transparent;border-top:1.7px solid #e5e7eb"></div><div style="left:564.0px;top:87.1px;width:11.4px;height:12.4px;background:#4b5563;border-radius:1.4px"><svg style="left:3.2px;top:3.4px;width:5.4px;height:5.4px" viewBox="0 0 10 10"><path d="M1.5 8.5L8 2" stroke="#e56a6a" stroke-width="1.8"/></svg></div><div style="left:9.5px;top:107.9px;width:452.0px;height:7.6px;border:0.5px solid #161c28;border-radius:1px"></div><svg style="left:13.6px;top:109.6px;width:5px;height:5px" viewBox="0 0 10 10"><circle cx="5" cy="5" r="4" fill="none" stroke="#d1d5db" stroke-width="1"/><path d="M3 4.2L5 6.2L7 4.2" fill="none" stroke="#d1d5db" stroke-width="1"/></svg><span class="t " style="left:20.0px;top:109.3px;font-size:5.2px;font-weight:bold;color:#fff">提示词</span><span class="t " style="left:40.0px;top:110.1px;font-size:4px;color:#e5e7eb">(64/75)</span><div style="left:64.4px;top:107.1px;width:9.8px;height:10.0px;background:#20252f;border-radius:1px;font-size:5px;line-height:10px;text-align:center;color:#8d95a3">设</div><div style="left:74.6px;top:107.1px;width:9.8px;height:10.0px;background:#20252f;border-radius:1px;font-size:5px;line-height:10px;text-align:center;color:#8d95a3">史</div><div style="left:88.6px;top:107.1px;width:9.8px;height:10.0px;background:#20252f;border-radius:1px;font-size:5px;line-height:10px;text-align:center;color:#8d95a3">翻</div><div style="left:98.8px;top:107.1px;width:9.8px;height:10.0px;background:#20252f;border-radius:1px;font-size:5px;line-height:10px;text-align:center;color:#8d95a3">译</div><div style="left:112.6px;top:107.1px;width:9.8px;height:10.0px;background:#20252f;border-radius:1px;font-size:5px;line-height:10px;text-align:center;color:#8d95a3">库</div><div style="left:126.0px;top:107.1px;width:9.8px;height:10.0px;background:#20252f;border-radius:1px;font-size:5px;line-height:10px;text-align:center;color:#8d95a3">收</div><div style="left:136.4px;top:107.1px;width:9.8px;height:10.0px;background:#20252f;border-radius:1px;font-size:5px;line-height:10px;text-align:center;color:#8d95a3">藏</div><div style="left:149.8px;top:107.1px;width:9.8px;height:10.0px;background:#20252f;border-radius:1px;font-size:5px;line-height:10px;text-align:center;color:#8d95a3">清</div><div style="left:210.8px;top:109.5px;width:5.0px;height:5.0px;background:#2f7fd6;border-radius:0.8px"><svg style="left:0.6px;top:0.6px;width:3.8px;height:3.8px" viewBox="0 0 10 10"><path d="M1.5 5.2L4 7.8L8.6 2.4" fill="none" stroke="#fff" stroke-width="1.8"/></svg></div><div style="left:217.4px;top:108.7px;width:4.4px;height:6.6px;border-left:0.6px solid #8f98a6;border-top:0.6px solid #8f98a6;border-bottom:0.6px solid #8f98a6;border-radius:0.6px"></div><span class="t " style="left:225.0px;top:110.0px;font-size:4.1px;color:#5b6475">请输入新关键词</span><span class="t tag" style="left:14.8px;top:122.0px">award winning photo of a high speed purple sports car</span><svg style="left:124.3px;top:123.0px;width:3.4px;height:3.4px" viewBox="0 0 10 10"><path d="M1 1L9 9M9 1L1 9" stroke="#cfd4dc" stroke-width="1.5"/></svg><span class="t tsub" style="left:14.8px;top:129.1px;">空</span><span class="t tag" style="left:132.5px;top:122.0px">hyper-realism</span><svg style="left:161.7px;top:123.0px;width:3.4px;height:3.4px" viewBox="0 0 10 10"><path d="M1 1L9 9M9 1L1 9" stroke="#cfd4dc" stroke-width="1.5"/></svg><span class="t tsub" style="left:132.5px;top:129.1px;">空</span><span class="t tag" style="left:169.8px;top:122.0px">racing fast over wet track at night</span><svg style="left:237.3px;top:123.0px;width:3.4px;height:3.4px" viewBox="0 0 10 10"><path d="M1 1L9 9M9 1L1 9" stroke="#cfd4dc" stroke-width="1.5"/></svg><span class="t tsub" style="left:169.8px;top:129.1px;">空</span><span class="t tag" style="left:246.0px;top:122.0px">The license plate number is "foobr"</span><svg style="left:317.3px;top:123.0px;width:3.4px;height:3.4px" viewBox="0 0 10 10"><path d="M1 1L9 9M9 1L1 9" stroke="#cfd4dc" stroke-width="1.5"/></svg><span class="t tsub" style="left:246.0px;top:129.1px;">空</span><span class="t tag" style="left:325.0px;top:122.0px">motion blur</span><svg style="left:352.1px;top:123.0px;width:3.4px;height:3.4px" viewBox="0 0 10 10"><path d="M1 1L9 9M9 1L1 9" stroke="#cfd4dc" stroke-width="1.5"/></svg><span class="t tsub" style="left:325.0px;top:129.1px;">运动模糊/动态模糊</span><span class="t tag" style="left:361.0px;top:122.0px">☰</span><svg style="left:367.8px;top:123.0px;width:3.4px;height:3.4px" viewBox="0 0 10 10"><path d="M1 1L9 9M9 1L1 9" stroke="#cfd4dc" stroke-width="1.5"/></svg><span class="t tag" style="left:375.4px;top:122.0px">expansive glowing cityscape</span><svg style="left:433.5px;top:123.0px;width:3.4px;height:3.4px" viewBox="0 0 10 10"><path d="M1 1L9 9M9 1L1 9" stroke="#cfd4dc" stroke-width="1.5"/></svg><span class="t tsub" style="left:375.4px;top:129.1px;">空</span><div style="left:13.0px;top:135.7px;width:24.9px;height:8.0px;background:#5b21a6;border-radius:0.6px"></div><span class="t tag" style="left:14.4px;top:137.2px">neon lights</span><svg style="left:38.9px;top:138.2px;width:3.4px;height:3.4px" viewBox="0 0 10 10"><path d="M1 1L9 9M9 1L1 9" stroke="#cfd4dc" stroke-width="1.5"/></svg><span class="t tsub" style="left:14.4px;top:144.3px;">霓虹灯</span><span class="t tag" style="left:46.6px;top:137.2px">city lights</span><svg style="left:64.9px;top:138.2px;width:3.4px;height:3.4px" viewBox="0 0 10 10"><path d="M1 1L9 9M9 1L1 9" stroke="#cfd4dc" stroke-width="1.5"/></svg><span class="t tsub" style="left:46.6px;top:144.3px;">城市灯光/城市 灯光(主题)</span><span class="t tag" style="left:77.6px;top:137.2px">high contrast(景深/对比度)</span><svg style="left:129.2px;top:138.2px;width:3.4px;height:3.4px" viewBox="0 0 10 10"><path d="M1 1L9 9M9 1L1 9" stroke="#cfd4dc" stroke-width="1.5"/></svg><div style="left:136.0px;top:135.7px;width:50.0px;height:8.0px;background:#4d7c0f;border-radius:0.6px"></div><span class="t tag" style="left:137.4px;top:137.2px">depth of field</span><svg style="left:186.5px;top:138.2px;width:3.4px;height:3.4px" viewBox="0 0 10 10"><path d="M1 1L9 9M9 1L1 9" stroke="#cfd4dc" stroke-width="1.5"/></svg><span class="t tsub" style="left:137.4px;top:144.3px;">景深(协调焦距)，景深，视野深度/景深(摄影术语)，聚焦，景深</span><span class="t tag" style="left:195.0px;top:137.2px">film grain</span><svg style="left:226.3px;top:138.2px;width:3.4px;height:3.4px" viewBox="0 0 10 10"><path d="M1 1L9 9M9 1L1 9" stroke="#cfd4dc" stroke-width="1.5"/></svg><span class="t tag" style="left:234.6px;top:137.2px">splashing rain</span><svg style="left:264.6px;top:138.2px;width:3.4px;height:3.4px" viewBox="0 0 10 10"><path d="M1 1L9 9M9 1L1 9" stroke="#cfd4dc" stroke-width="1.5"/></svg><span class="t tsub" style="left:234.6px;top:144.3px;">空</span><span class="t tag" style="left:272.6px;top:137.2px">cool tones</span><svg style="left:295.5px;top:138.2px;width:3.4px;height:3.4px" viewBox="0 0 10 10"><path d="M1 1L9 9M9 1L1 9" stroke="#cfd4dc" stroke-width="1.5"/></svg><span class="t tag" style="left:303.0px;top:137.2px">award winning photo</span><svg style="left:347.3px;top:138.2px;width:3.4px;height:3.4px" viewBox="0 0 10 10"><path d="M1 1L9 9M9 1L1 9" stroke="#cfd4dc" stroke-width="1.5"/></svg><span class="t tsub" style="left:303.0px;top:144.3px;">空</span><span class="t tag" style="left:355.0px;top:137.2px">wide angle</span><svg style="left:378.6px;top:138.2px;width:3.4px;height:3.4px" viewBox="0 0 10 10"><path d="M1 1L9 9M9 1L1 9" stroke="#cfd4dc" stroke-width="1.5"/></svg><span class="t tsub" style="left:355.0px;top:144.3px;">广角</span><span class="t tag" style="left:387.8px;top:137.2px">☰</span><svg style="left:395.3px;top:138.2px;width:3.4px;height:3.4px" viewBox="0 0 10 10"><path d="M1 1L9 9M9 1L1 9" stroke="#cfd4dc" stroke-width="1.5"/></svg><span class="t tag" style="left:402.6px;top:137.2px">glowing lines</span><svg style="left:430.8px;top:138.2px;width:3.4px;height:3.4px" viewBox="0 0 10 10"><path d="M1 1L9 9M9 1L1 9" stroke="#cfd4dc" stroke-width="1.5"/></svg><span class="t tsub" style="left:402.6px;top:144.3px;">发光线条</span><svg style="left:70.0px;top:138.3px;width:3px;height:3px" viewBox="0 0 10 10"><path d="M1 1L9 9M9 1L1 9" stroke="#6b7280" stroke-width="1.4"/></svg><span class="t tag" style="left:14.8px;top:151.8px">fish-eye lens</span><svg style="left:41.3px;top:152.8px;width:3.4px;height:3.4px" viewBox="0 0 10 10"><path d="M1 1L9 9M9 1L1 9" stroke="#cfd4dc" stroke-width="1.5"/></svg><span class="t tsub" style="left:14.8px;top:158.9px;">空</span><span class="t tag" style="left:50.0px;top:151.8px">light trails</span><svg style="left:72.8px;top:152.8px;width:3.4px;height:3.4px" viewBox="0 0 10 10"><path d="M1 1L9 9M9 1L1 9" stroke="#cfd4dc" stroke-width="1.5"/></svg><span class="t tsub" style="left:50.0px;top:158.9px;">空</span><div style="left:10.0px;top:166.5px;width:452.0px;height:9.5px;background:#2b2e36;border-radius:0.8px"></div><div style="left:10.0px;top:166.5px;width:28.0px;height:9.5px;background:#5a5d63;border-radius:0.8px 0 0 0.8px"></div><span class="cat" style="left:10.0px;top:166.5px;width:28.4px">我的收藏</span><span class="cat" style="left:38.4px;top:166.5px;width:28.0px">扩展状态</span><span class="cat" style="left:66.4px;top:166.5px;width:19.2px">人物</span><span class="cat" style="left:85.6px;top:166.5px;width:18.4px">服饰</span><span class="cat" style="left:104.0px;top:166.5px;width:27.6px">表情动作</span><span class="cat" style="left:131.6px;top:166.5px;width:18.8px">画面</span><span class="cat" style="left:150.4px;top:166.5px;width:18.8px">环境</span><span class="cat" style="left:169.2px;top:166.5px;width:18.8px">场景</span><span class="cat" style="left:188.0px;top:166.5px;width:19.0px">物品</span><span class="cat" style="left:207.0px;top:166.5px;width:19.0px">镜头</span><span class="cat" style="left:226.0px;top:166.5px;width:19.0px">汉服</span><span class="cat" style="left:245.0px;top:166.5px;width:24.0px">魔法系</span><span class="cat" style="left:269.0px;top:166.5px;width:50.0px">其他词汇示例</span><div style="left:11.6px;top:177.9px;width:19.0px;height:8.4px;border:0.5px solid #1e2532;border-radius:0.8px;font-size:4.2px;line-height:7.6px;text-align:center;color:#e5e7eb;background:#121722">人主题</div><div style="left:32.6px;top:177.9px;width:19.0px;height:8.4px;border:0.5px solid #1e2532;border-radius:0.8px;font-size:4.2px;line-height:7.6px;text-align:center;color:#e5e7eb;background:#121722">物主题</div><div style="left:10.0px;top:188.7px;width:452.0px;height:0.5px;background:#1c2433"></div><svg style="left:455.0px;top:157.9px;width:6px;height:6px" viewBox="0 0 10 10"><circle cx="5" cy="5" r="4" fill="none" stroke="#e5e7eb" stroke-width="0.9"/><path d="M2.4 3.6L5 5.6L7.6 3.6M2.4 7h5.2" fill="none" stroke="#e5e7eb" stroke-width="0.9"/></svg><svg style="left:13.6px;top:194.2px;width:5px;height:5px" viewBox="0 0 10 10"><circle cx="5" cy="5" r="4" fill="none" stroke="#d1d5db" stroke-width="1"/><path d="M3 4.2L5 6.2L7 4.2" fill="none" stroke="#d1d5db" stroke-width="1"/></svg><span class="t " style="left:20.0px;top:193.9px;font-size:5.2px;font-weight:bold;color:#fff">反向词</span><span class="t " style="left:40.0px;top:194.7px;font-size:4px;color:#e5e7eb">(0/75)</span><div style="left:64.4px;top:191.7px;width:9.8px;height:10.0px;background:#20252f;border-radius:1px;font-size:5px;line-height:10px;text-align:center;color:#8d95a3">设</div><div style="left:74.6px;top:191.7px;width:9.8px;height:10.0px;background:#20252f;border-radius:1px;font-size:5px;line-height:10px;text-align:center;color:#8d95a3">史</div><div style="left:88.6px;top:191.7px;width:9.8px;height:10.0px;background:#20252f;border-radius:1px;font-size:5px;line-height:10px;text-align:center;color:#8d95a3">翻</div><div style="left:98.8px;top:191.7px;width:9.8px;height:10.0px;background:#20252f;border-radius:1px;font-size:5px;line-height:10px;text-align:center;color:#8d95a3">译</div><div style="left:112.6px;top:191.7px;width:9.8px;height:10.0px;background:#20252f;border-radius:1px;font-size:5px;line-height:10px;text-align:center;color:#8d95a3">库</div><div style="left:126.0px;top:191.7px;width:9.8px;height:10.0px;background:#20252f;border-radius:1px;font-size:5px;line-height:10px;text-align:center;color:#8d95a3">收</div><div style="left:136.4px;top:191.7px;width:9.8px;height:10.0px;background:#20252f;border-radius:1px;font-size:5px;line-height:10px;text-align:center;color:#8d95a3">藏</div><div style="left:199.4px;top:194.1px;width:5.0px;height:5.0px;background:#2f7fd6;border-radius:0.8px"><svg style="left:0.6px;top:0.6px;width:3.8px;height:3.8px" viewBox="0 0 10 10"><path d="M1.5 5.2L4 7.8L8.6 2.4" fill="none" stroke="#fff" stroke-width="1.8"/></svg></div><div style="left:206.0px;top:193.3px;width:4.4px;height:6.6px;border-left:0.6px solid #8f98a6;border-top:0.6px solid #8f98a6;border-bottom:0.6px solid #8f98a6;border-radius:0.6px"></div><span class="t " style="left:214.0px;top:194.6px;font-size:4.1px;color:#5b6475">请输入新关键词</span><div style="left:10.0px;top:205.6px;width:452.0px;height:9.5px;background:#2b2e36;border-radius:0.8px"></div><div style="left:10.0px;top:205.6px;width:28.0px;height:9.5px;background:#5a5d63;border-radius:0.8px 0 0 0.8px"></div><span class="cat" style="left:10.0px;top:205.6px;width:28.4px">我的收藏</span><span class="cat" style="left:38.4px;top:205.6px;width:28.0px">扩展状态</span><span class="cat" style="left:66.4px;top:205.6px;width:19.2px">人物</span><span class="cat" style="left:85.6px;top:205.6px;width:18.4px">服饰</span><span class="cat" style="left:104.0px;top:205.6px;width:27.6px">表情动作</span><span class="cat" style="left:131.6px;top:205.6px;width:18.8px">画面</span><span class="cat" style="left:150.4px;top:205.6px;width:18.8px">环境</span><span class="cat" style="left:169.2px;top:205.6px;width:18.8px">场景</span><span class="cat" style="left:188.0px;top:205.6px;width:19.0px">物品</span><span class="cat" style="left:207.0px;top:205.6px;width:19.0px">镜头</span><span class="cat" style="left:226.0px;top:205.6px;width:19.0px">汉服</span><span class="cat" style="left:245.0px;top:205.6px;width:24.0px">魔法系</span><span class="cat" style="left:269.0px;top:205.6px;width:50.0px">其他词汇示例</span><div style="left:11.6px;top:217.3px;width:19.0px;height:8.4px;border:0.5px solid #1e2532;border-radius:0.8px;font-size:4.2px;line-height:7.6px;text-align:center;color:#e5e7eb;background:#121722">人主题</div><div style="left:32.6px;top:217.3px;width:19.0px;height:8.4px;border:0.5px solid #1e2532;border-radius:0.8px;font-size:4.2px;line-height:7.6px;text-align:center;color:#e5e7eb;background:#121722">物主题</div><div style="left:10.0px;top:228.1px;width:452.0px;height:0.5px;background:#1c2433"></div><svg style="left:455.0px;top:196.9px;width:6px;height:6px" viewBox="0 0 10 10"><circle cx="5" cy="5" r="4" fill="none" stroke="#e5e7eb" stroke-width="0.9"/><path d="M2.4 3.6L5 5.6L7.6 3.6M2.4 7h5.2" fill="none" stroke="#e5e7eb" stroke-width="0.9"/></svg><div style="left:9.6px;top:234.7px;width:20.6px;height:12.4px;border:0.5px solid #181e2a;border-bottom:none;border-radius:1.4px 1.4px 0 0"></div><div style="left:30.0px;top:246.9px;width:546.0px;height:0.5px;background:#1a202c"></div><span class="t " style="left:15.4px;top:239.3px;font-size:5px;color:#f3f4f6">生成</span><span class="t " style="left:37.0px;top:239.3px;font-size:5px;color:#9aa3b2">嵌入式 (T.I. Embedding)</span><span class="t " style="left:100.4px;top:239.3px;font-size:5px;color:#9aa3b2">超网络 (Hypernetworks)</span><span class="t " style="left:166.4px;top:239.3px;font-size:5px;color:#9aa3b2">模型</span><span class="t " style="left:187.4px;top:239.3px;font-size:5px;color:#9aa3b2">Lora</span><div style="left:9.4px;top:246.9px;width:283.6px;height:248.6px;border:0.5px solid #1a212e;border-top:none;border-radius:0 0 1.6px 1.6px"></div><span class="t lbl" style="left:14.0px;top:252.7px;">采样方法 (Sampler)</span><div class="blk" style="left:14.0px;top:259.1px;width:136.6px;height:13.0px;"></div><span class="t " style="left:20.0px;top:263.1px;font-size:4.4px;color:#f3f4f6">Euler a</span><div style="left:139.6px;top:264.9px;width:0;height:0;border-left:1.3px solid transparent;border-right:1.3px solid transparent;border-top:1.7px solid #e5e7eb"></div><span class="t lbl" style="left:152.8px;top:252.7px;">迭代步数 (Steps)</span><div class="num" style="left:261.6px;top:252.3px;width:28.4px;height:8.0px;">20</div><div class="trk" style="left:154.0px;top:263.1px;width:136.0px;height:2.0px;"><i style="width:18.8px"></i></div><div class="knob" style="left:170.6px;top:261.9px;width:4.4px;height:4.4px;"></div><div style="left:14.0px;top:274.3px;width:137.0px;height:12.2px;border:0.5px solid #1a212e;border-radius:1px"></div><div style="left:17.2px;top:277.9px;width:4.6px;height:4.6px;background:#1f2937;border:0.4px solid #4b5563;border-radius:0.6px"></div><span class="t " style="left:25.0px;top:277.9px;font-size:4.6px;font-weight:bold;color:#f3f4f6">高分辨率修复 (Hires. fix)</span><div style="left:142.6px;top:278.3px;width:0;height:0;border-top:2px solid transparent;border-bottom:2px solid transparent;border-right:3px solid #f3f4f6"></div><div style="left:153.0px;top:274.3px;width:137.4px;height:12.2px;border:0.5px solid #1a212e;border-radius:1px"></div><div style="left:156.8px;top:277.9px;width:4.6px;height:4.6px;background:#1f2937;border:0.4px solid #4b5563;border-radius:0.6px"></div><span class="t " style="left:164.0px;top:277.9px;font-size:4.6px;font-weight:bold;color:#f3f4f6">Refiner</span><div style="left:281.6px;top:278.3px;width:0;height:0;border-top:2px solid transparent;border-bottom:2px solid transparent;border-right:3px solid #f3f4f6"></div><span class="t lbl" style="left:14.0px;top:290.3px;">宽度</span><div class="num" style="left:177.4px;top:289.9px;width:27.4px;height:8.0px;">1024</div><div class="trk" style="left:14.0px;top:300.7px;width:191.0px;height:2.0px;"><i style="width:93.0px"></i></div><div class="knob" style="left:104.8px;top:299.5px;width:4.4px;height:4.4px;"></div><span class="t lbl" style="left:14.0px;top:308.9px;">高度</span><div class="num" style="left:177.4px;top:308.5px;width:27.4px;height:8.0px;">1024</div><div class="trk" style="left:14.0px;top:319.2px;width:191.0px;height:2.0px;"><i style="width:93.0px"></i></div><div class="knob" style="left:104.8px;top:318.0px;width:4.4px;height:4.4px;"></div><div style="left:210.8px;top:301.1px;width:11.0px;height:12.0px;background:#374151;border-radius:1.4px"><svg style="left:3px;top:3.2px;width:5px;height:5.6px" viewBox="0 0 10 11"><path d="M3 1V10M1 3L3 1L5 3M7 10V1M5 8L7 10L9 8" fill="none" stroke="#fff" stroke-width="1.4"/></svg></div><span class="t lbl" style="left:228.0px;top:290.3px;">总批次数</span><div class="num" style="left:261.6px;top:289.9px;width:28.4px;height:8.0px;">1</div><div class="trk" style="left:228.0px;top:300.7px;width:62.0px;height:2.0px;"><i style="width:2.2px"></i></div><div class="knob" style="left:228.0px;top:299.5px;width:4.4px;height:4.4px;"></div><span class="t lbl" style="left:228.0px;top:308.9px;">单批数量</span><div class="num" style="left:261.6px;top:308.5px;width:28.4px;height:8.0px;">1</div><div class="trk" style="left:228.0px;top:319.2px;width:62.0px;height:2.0px;"><i style="width:2.2px"></i></div><div class="knob" style="left:228.0px;top:318.0px;width:4.4px;height:4.4px;"></div><span class="t lbl" style="left:14.0px;top:326.1px;">提示词引导系数 (CFG Scale)</span><div class="num" style="left:261.6px;top:325.3px;width:28.4px;height:8.0px;">7</div><div class="trk" style="left:14.0px;top:336.5px;width:276.0px;height:2.0px;"><i style="width:59.0px"></i></div><div class="knob" style="left:70.8px;top:335.3px;width:4.4px;height:4.4px;"></div><span class="t lbl" style="left:14.0px;top:343.1px;">随机数种子 (Seed)</span><div class="blk" style="left:14.0px;top:349.8px;width:226.6px;height:13.0px;"></div><span class="t " style="left:19.4px;top:354.1px;font-size:4.4px;color:#f3f4f6">-1</span><div style="left:243.4px;top:350.7px;width:11.6px;height:12.0px;background:#4b5563;border-radius:1.4px"><div style="left:3.3px;top:3.4px;width:5px;height:5px;background:#e5e7eb;border-radius:1px"></div><div style="left:4.6px;top:4.7px;width:2.4px;height:2.4px;background:#4b5563;border-radius:1.2px"></div></div><div style="left:257.2px;top:350.7px;width:11.6px;height:12.0px;background:#3f6f63;border-radius:1.4px"><svg style="left:3.2px;top:3.3px;width:5.4px;height:5.4px" viewBox="0 0 10 10"><path d="M5 1L8.5 7H1.5Z" fill="none" stroke="#5fd08a" stroke-width="1.5"/></svg></div><div style="left:272.0px;top:354.3px;width:4.6px;height:4.6px;background:#1f2937;border:0.4px solid #4b5563;border-radius:0.6px"></div><div style="left:279.4px;top:355.3px;width:0;height:0;border-left:2px solid transparent;border-right:2px solid transparent;border-top:3px solid #f3f4f6"></div><div class="acc" style="top:366.7px;left:14.0px"><b>ADetailer</b><i></i></div><div class="acc" style="top:381.7px;left:14.0px"><b>Tiled Diffusion</b><i></i></div><div class="acc" style="top:396.7px;left:14.0px"><b>Tiled VAE</b><i></i></div><div class="acc" style="top:411.7px;left:14.0px"><b>ControlNet v1.1.418</b><i></i></div><div class="acc" style="top:426.7px;left:14.0px"><b>Segment Anything (分离图像元素)</b><i></i></div><span class="t lbl" style="left:14.0px;top:441.7px;">脚本</span><div class="blk" style="left:14.0px;top:447.7px;width:276.0px;height:13.2px;"></div><span class="t " style="left:19.6px;top:451.9px;font-size:4.4px;color:#f3f4f6">None</span><div style="left:278.6px;top:453.7px;width:0;height:0;border-left:1.3px solid transparent;border-right:1.3px solid transparent;border-top:1.7px solid #e5e7eb"></div><div style="left:294.8px;top:248.7px;width:280.6px;height:246.8px;border:0.5px solid #1a212e;border-radius:1.6px;background:#0d1220"></div><div style="left:298.0px;top:252.3px;width:274.4px;height:150.6px;background:#0b0f19;border:0.5px solid #141a26;border-radius:1.2px"></div><div style="left:295.3px;top:403.7px;width:279.6px;height:91.4px;background:#111827;border-radius:0 0 1.4px 1.4px"></div><div style="left:553.6px;top:256.7px;width:13.0px;height:6.0px;background:#161c29;border-radius:1px"><div style="left:2px;top:1.4px;width:2.6px;height:3.2px;background:#566074"></div><div style="left:8px;top:1.4px;width:2.6px;height:3.2px;background:#566074"></div></div><svg style="left:368.9px;top:254.6px;width:129px;height:128px;border:0.9px solid #fff;box-sizing:border-box;background:#160830" viewBox="0 0 128 128" preserveAspectRatio="none"><defs>
<linearGradient id="cbg" x1="0" y1="0" x2="1" y2="0"><stop offset="0" stop-color="#2c0e78"/><stop offset="0.3" stop-color="#2a0c6c"/><stop offset="0.55" stop-color="#150838"/><stop offset="0.8" stop-color="#0a0518"/><stop offset="1" stop-color="#06030c"/></linearGradient>
<linearGradient id="cbgv" x1="0" y1="0" x2="0" y2="1"><stop offset="0" stop-color="#000" stop-opacity="0.25"/><stop offset="0.45" stop-color="#000" stop-opacity="0"/></linearGradient>
<linearGradient id="croad" x1="0" y1="0" x2="1" y2="0"><stop offset="0" stop-color="#3a1c66"/><stop offset="0.22" stop-color="#47267a"/><stop offset="0.4" stop-color="#1c0c30"/><stop offset="0.6" stop-color="#0b0512"/><stop offset="1" stop-color="#100716"/></linearGradient>
<linearGradient id="croadv" x1="0" y1="0" x2="0" y2="1"><stop offset="0" stop-color="#000" stop-opacity="0"/><stop offset="1" stop-color="#000" stop-opacity="0.4"/></linearGradient>
<radialGradient id="cglow" cx="0.5" cy="0.5" r="0.5"><stop offset="0" stop-color="#fff"/><stop offset="0.3" stop-color="#fff" stop-opacity="0.97"/><stop offset="0.55" stop-color="#e2b8ff" stop-opacity="0.6"/><stop offset="1" stop-color="#8a3fe0" stop-opacity="0"/></radialGradient>
<radialGradient id="cglow2" cx="0.5" cy="0.5" r="0.5"><stop offset="0" stop-color="#a050ff" stop-opacity="0.9"/><stop offset="0.6" stop-color="#7a2ee0" stop-opacity="0.45"/><stop offset="1" stop-color="#6a20d0" stop-opacity="0"/></radialGradient>
<linearGradient id="cbody" x1="0" y1="0" x2="0" y2="1"><stop offset="0" stop-color="#6a22c8"/><stop offset="0.4" stop-color="#5a18b0"/><stop offset="0.75" stop-color="#2a0c58"/><stop offset="1" stop-color="#12051f"/></linearGradient>
<linearGradient id="chor" x1="0" y1="0" x2="1" y2="0"><stop offset="0" stop-color="#f0b040" stop-opacity="0"/><stop offset="0.3" stop-color="#e8a838"/><stop offset="1" stop-color="#b86a28"/></linearGradient>
<filter id="cb1" x="-30%" y="-30%" width="160%" height="160%"><feGaussianBlur stdDeviation="1.1"/></filter>
<filter id="cb2" x="-40%" y="-40%" width="180%" height="180%"><feGaussianBlur stdDeviation="2.6"/></filter>
<filter id="cb0" x="-30%" y="-30%" width="160%" height="160%"><feGaussianBlur stdDeviation="0.5"/></filter>
</defs><g id="carimg">
<rect width="128" height="128" fill="url(#cbg)"/>
<rect width="128" height="128" fill="url(#cbgv)"/>
<ellipse cx="30" cy="28" rx="30" ry="42" fill="url(#cglow2)"/>
<ellipse cx="35" cy="24" rx="9" ry="30" fill="#9a3cf0" opacity="0.75" filter="url(#cb2)"/>
<rect y="56" width="128" height="72" fill="url(#croad)"/>
<rect y="56" width="128" height="72" fill="url(#croadv)"/>
<g filter="url(#cb1)"><path d="M58 55L128 46V61L60 58Z" fill="#5a1c6c"/><path d="M84 60L128 62V72L96 65Z" fill="#4a2060"/><path d="M100 66L128 70V76L108 70Z" fill="#33164a"/></g>
<g filter="url(#cb0)"><path d="M72 55.200L128 49.600V51.600L72 56.200Z" fill="url(#chor)"/><path d="M80 56.600L128 52.600V54.400L80 57.600Z" fill="#e0a030" opacity="0.85"/>
<path d="M84 58.400L128 56.400V58.400L84 59.600Z" fill="#b0508a" opacity="0.7"/></g>
<path d="M0 55L26 54.600L25 60L0 63Z" fill="#1c0a3c" filter="url(#cb0)"/>
<path d="M0 59.600h22v1.800H0z" fill="#a060c0" opacity="0.6" filter="url(#cb0)"/>
<g filter="url(#cb1)"><path d="M0 10L3.400 11L13 25L9.600 27.400L0 17Z" fill="#fff"/><path d="M11 26L15.600 24L29.600 52L26.600 53.600Z" fill="#f0d8ff"/><path d="M0 35L10 43L8.600 45L0 40Z" fill="#d0a8f4" opacity="0.9"/><path d="M11 45L25 54.600L23 56L10 48Z" fill="#c9a0f0" opacity="0.8"/><path d="M0 47L20 55.600L0 52Z" fill="#b080e0" opacity="0.55"/>
<ellipse cx="35.800" cy="11.400" rx="3.500" ry="3.400" fill="#fbe8ff"/><ellipse cx="32.600" cy="26" rx="2.600" ry="2.600" fill="#fbe8ff"/><ellipse cx="31" cy="34" rx="2" ry="2" fill="#f6e0ff"/><ellipse cx="31" cy="40" rx="1.600" ry="1.800" fill="#f0dcff"/><path d="M30.400 42h1.600v9h-1.600z" fill="#e8ccff" opacity="0.8"/>
<path d="M34 0h7L38.600 4h-3Z" fill="#e8ccff"/></g>
<g filter="url(#cb2)"><path d="M12 58L36 58L33 108L18 122Z" fill="#c8a0f8" opacity="0.7"/><path d="M18 60h11l-2 46h-6z" fill="#fff"/></g>
<ellipse cx="32" cy="55.500" rx="27" ry="21" fill="url(#cglow)"/>
<path d="M44 52L47 50.600L38 58Z" fill="#fff" opacity="0.8" filter="url(#cb0)"/>
<path d="M38.400 64L41.600 64L57 128L43 128Z" fill="#d27a16" filter="url(#cb0)"/>
<path d="M50 100L57 128L43 128L46 100Z" fill="#7a4410" opacity="0.35"/>
<path d="M44 67.600C42 64.600 46 61.600 51 60L60 57C68 55.400 78 55.800 82 58L93 65L110 71.400C115.600 74 117.400 79 116 84L113 91.400C109 95.800 100 97.800 90 97.800L70 96.400C62 94.400 54 88.400 49 80.400Z" fill="url(#cbody)"/>
<path d="M55.600 61C61 58.400 75 57.800 80 59.200L90.600 66C81 65.600 67 66.600 61.400 69C58.400 66.600 56.600 63.600 55.600 61Z" fill="#2a1c72"/>
<path d="M58 61.400C63 59.600 72 59 77 59.800L80 62C74 61.400 64 62.400 60 64Z" fill="#4a3ab0" opacity="0.7"/>
<path d="M61.400 69C71 66.200 85 65.600 93 66.600L110 72C102 71.600 82 72.600 67 76.600Z" fill="#8436e6" opacity="0.85"/>
<path d="M70 70C80 68 92 68 100 70C92 70.600 80 71.600 72 73.400Z" fill="#b078ff" opacity="0.55" filter="url(#cb0)"/>
<path d="M66 82.600C74 86.600 100 88.600 114.600 84.400L112.600 91.400C106 95.800 92 97 74 95Z" fill="#0c0414" opacity="0.92"/>
<ellipse cx="58" cy="82" rx="4.200" ry="8.600" fill="#0b0512"/><ellipse cx="57.800" cy="82" rx="2.300" ry="5.200" fill="#857ea0"/><ellipse cx="57.800" cy="82" rx="1" ry="2.400" fill="#2a2438"/>
<g filter="url(#cb0)"><ellipse cx="77.400" cy="77.600" rx="6.800" ry="2.500" fill="#fff" transform="rotate(10 77.400 77.600)"/><ellipse cx="110.600" cy="77.400" rx="4" ry="3.200" fill="#fbeaff" transform="rotate(-35 110.600 77.400)"/><ellipse cx="72" cy="76.400" rx="2.600" ry="2.200" fill="#ecd0ff"/><ellipse cx="63.600" cy="79.600" rx="1.200" ry="1" fill="#f0d0ff"/><path d="M84 81.800Q98 84.400 113 80.600" fill="none" stroke="#c090ff" stroke-width="0.9"/></g>
<path d="M50.600 62.400l3-1.400v2.400l-3 0.600z" fill="#2a1050"/>
<g filter="url(#cb0)"><path d="M82.600 117l1.600 4.400l-1.600 6.600l-1.600-6.600z" fill="#fff"/><path d="M112.600 104l2.400 7l-2.400 13l-2.400-13z" fill="#e8dcff" opacity="0.9"/><path d="M93 43.600h5.400v3.400h-5.400z" fill="#4a3c68"/><path d="M118 42.600h6v1.600h-6z" fill="#3a2a50"/></g>
</g></svg><svg style="left:426.4px;top:387.2px;width:13.6px;height:13.2px;border:0.8px solid #e88a4a;box-sizing:border-box" viewBox="0 0 128 128" preserveAspectRatio="none"><use href="#carimg"/></svg><div style="left:385.8px;top:408.8px;width:11.3px;height:12.4px;background:#4b5563;border-radius:1.4px"><svg style="left:3px;top:3.6px;width:5.4px;height:5.4px" viewBox="0 0 10 10"><path d="M1 2.2h3l1 1.2h4v5H1z" fill="#f2c744"/></svg></div><div style="left:399.6px;top:408.8px;width:11.3px;height:12.4px;background:#4b5563;border-radius:1.4px"><svg style="left:3px;top:3.4px;width:5.4px;height:5.6px" viewBox="0 0 10 10"><rect x="1.6" y="1" width="6.8" height="8" rx="0.8" fill="#eef0f4"/><rect x="3" y="1" width="4" height="2.6" fill="#5a6fbf"/><rect x="2.8" y="5.6" width="4.4" height="3.4" fill="#c9ced8"/></svg></div><div style="left:413.4px;top:408.8px;width:11.3px;height:12.4px;background:#4b5563;border-radius:1.4px"><svg style="left:3px;top:3.4px;width:5.4px;height:5.6px" viewBox="0 0 10 10"><rect x="1" y="1.2" width="8" height="4.8" fill="#e6d9a8"/><path d="M5 6V9M3 9h4" stroke="#c9b25a" stroke-width="1"/></svg></div><div style="left:427.2px;top:408.8px;width:11.3px;height:12.4px;background:#4b5563;border-radius:1.4px"><svg style="left:3px;top:3.4px;width:5.4px;height:5.6px" viewBox="0 0 10 10"><rect x="1" y="1.4" width="8" height="7.2" rx="0.6" fill="#d9c66a"/><path d="M1.6 7.4L4 4.6L5.8 6.4L7 5.4L8.6 7.4Z" fill="#5a8a4a"/></svg></div><div style="left:441.0px;top:408.8px;width:11.3px;height:12.4px;background:#4b5563;border-radius:1.4px"><svg style="left:3px;top:3.4px;width:5.4px;height:5.6px" viewBox="0 0 10 10"><circle cx="5" cy="5" r="3.6" fill="#e6c85a"/><circle cx="5" cy="5" r="1.5" fill="#4b5563"/><path d="M5 0.6V2M5 8V9.4M0.6 5H2M8 5H9.4" stroke="#e6c85a" stroke-width="1.2"/></svg></div><div style="left:454.8px;top:408.8px;width:11.3px;height:12.4px;background:#4b5563;border-radius:1.4px"><svg style="left:3px;top:3.4px;width:5.4px;height:5.6px" viewBox="0 0 10 10"><path d="M1.4 8.8V1.4L8.8 8.8Z" fill="#c9c6b4"/><path d="M3 7.4V5L5.4 7.4Z" fill="#4b5563"/></svg></div><div style="left:468.6px;top:408.8px;width:11.3px;height:12.4px;background:#4b5563;border-radius:1.4px"><svg style="left:3px;top:3.4px;width:5.4px;height:5.6px" viewBox="0 0 10 10"><path d="M5 0.8L6 4L9.2 5L6 6L5 9.2L4 6L0.8 5L4 4Z" fill="#f0d040"/></svg></div><span class="t " style="left:297.8px;top:429.3px;font-size:4.03px;font-weight:bold;color:#f3f4f6">award winning photo of a high speed purple sports car,hyper-realism,racing fast over wet track at night,The license plate number is</span><span class="t " style="left:297.8px;top:436.6px;font-size:4.03px;font-weight:bold;color:#f3f4f6">"foobr",motion blur,</span><span class="t " style="left:297.8px;top:444.0px;font-size:4.03px;font-weight:bold;color:#f3f4f6">expansive glowing cityscape,neon lights,city lights,high contrast,depth of field,film grain,splashing rain,cool tones,award winning photo,wide</span><span class="t " style="left:297.8px;top:451.6px;font-size:4.03px;font-weight:bold;color:#f3f4f6">angle,</span><span class="t " style="left:297.8px;top:459.2px;font-size:4.03px;font-weight:bold;color:#f3f4f6">glowing lines,fish-eye lens,light trails,</span><span class="t " style="left:297.8px;top:466.5px;font-size:4.10px;font-weight:normal;color:#f3f4f6">Steps: 20, Sampler: Euler a, CFG scale: 7, Seed: 1434517350, Size: 1024x1024, Model hash: e6bb9ea85b, Model: sd_xl_base_1.0_0.9vae, VAE</span><span class="t " style="left:297.8px;top:474.0px;font-size:3.95px;font-weight:bold;color:#f3f4f6">hash: 235745af8d, VAE: fixFP16ErrorsSDXLLowerMemoryUse_v10.safetensors, Clip skip: 2, Version: v1.6.0</span><span class="t " style="left:297.8px;top:484.9px;font-size:4.30px;font-weight:normal;color:#f3f4f6">用时: 11.4 sec.</span><span class="t" style="left:0;width:584.5px;text-align:center;top:505.9px;font-size:4.3px;font-weight:bold;color:#f3f4f6;word-spacing:1px">API &nbsp;•&nbsp; Github &nbsp;•&nbsp; Gradio &nbsp;•&nbsp; 启动配置 &nbsp;•&nbsp; 重载 UI</span><span class="t" style="left:0;width:584.5px;text-align:center;top:512.9px;font-size:3.9px;color:#d1d5db">版本: v1.6.0 &nbsp;•&nbsp; python: 3.11.10 &nbsp;•&nbsp; torch: 2.1.0a0+cxx11.abi &nbsp;•&nbsp; xformers: N/A &nbsp;•&nbsp; gradio: 3.41.2 &nbsp;•&nbsp; checkpoint: e6bb9ea85b</span></div></div><div id="hw"><div style="left:0;top:0;width:251.5px;height:9.6px;background:#f1f1f1"></div><div style="left:0;top:0;width:1.2px;height:697px;background:#9a9a9a"></div><svg style="left:4.6px;top:2.2px;width:5.4px;height:5.4px" viewBox="0 0 10 10"><rect x="0.5" y="0.5" width="9" height="9" rx="1" fill="#3a3a3a"/><rect x="2" y="2" width="6" height="2.6" fill="#dfe6ee"/><rect x="2" y="6" width="3" height="2" fill="#9fb4cc"/></svg><span class="t" style="left:11.4px;top:2.8px;font-size:4.05px;color:#8a8a8a;-webkit-text-stroke:0">HWiNFO64 v8.16-5600 - Sensors Status</span><div style="left:213px;top:4.8px;width:4px;height:0.5px;background:#999"></div><div style="left:227px;top:2.8px;width:4px;height:3.8px;border-top:0.6px solid #999;border-bottom:0.6px solid #999"></div><svg style="left:242.6px;top:2.6px;width:4.4px;height:4.4px" viewBox="0 0 10 10"><path d="M1 1L9 9M9 1L1 9" stroke="#aaa" stroke-width="1"/></svg><div style="left:1.2px;top:9.7px;width:250.3px;height:0.7px;background:#b8b8b8"></div><span class="t" style="left:3.6px;top:13.2px;font-size:3.7px;color:#333">Sensor</span><span class="t" style="left:78.8px;width:40px;text-align:right;top:13.2px;font-size:3.7px;color:#333">Current</span><span class="t" style="left:118.6px;width:40px;text-align:right;top:13.2px;font-size:3.7px;color:#333">Minimum</span><span class="t" style="left:157.6px;width:40px;text-align:right;top:13.2px;font-size:3.7px;color:#333">Maximum</span><span class="t" style="left:197.2px;width:40px;text-align:right;top:13.2px;font-size:3.7px;color:#333">Average</span><div style="left:0;top:0;width:251.5px;height:678px;overflow:hidden"><div class="row" style="top:18.59px"><div class="ic" style="left:9.8px"></div><span class="n" style="left:14.6px">Read Rate</span><span class="v" style="left:77.5px">0.000 MB/s</span><span class="v" style="left:117.3px">0.000 MB/s</span><span class="v" style="left:156.3px">0.000 MB/s</span><span class="v" style="left:195.9px">0.000 MB/s</span></div><div class="row o" style="top:24.21px"><div class="ic" style="left:9.8px"></div><span class="n" style="left:14.6px">Write Rate</span><span class="v" style="left:77.5px">0.000 MB/s</span><span class="v" style="left:117.3px">0.000 MB/s</span><span class="v" style="left:156.3px">0.000 MB/s</span><span class="v" style="left:195.9px">0.000 MB/s</span></div><div class="row" style="top:29.83px"><div class="ic" style="left:9.8px"></div><span class="n" style="left:14.6px">Read Total</span><span class="v" style="left:77.5px">24 MB</span><span class="v" style="left:117.3px">0 MB</span><span class="v" style="left:156.3px">24 MB</span></div><div class="row o" style="top:35.45px"><div class="ic" style="left:9.8px"></div><span class="n" style="left:14.6px">Write Total</span><span class="v" style="left:77.5px">5 MB</span><span class="v" style="left:117.3px">0 MB</span><span class="v" style="left:156.3px">5 MB</span></div><div class="row g" style="top:46.69px"><svg style="left:3px;top:1.6px;width:3px;height:2.4px" viewBox="0 0 10 8"><path d="M1 1.5L5 6L9 1.5" fill="none" stroke="#555" stroke-width="1.6"/></svg><div style="left:9.6px;top:0.7px;width:2.6px;height:4.2px;background:#3c3c3c;border-radius:0.4px"></div><span class="n">Drive: Samsung SSD 990 PRO with Heatsink 2TB (S7DRNJ0X417713N) [C:]</span></div><div class="row" style="top:52.31px"><div class="hl"></div><div class="ic" style="left:9.8px"></div><span class="n" style="left:14.6px">Read Activity</span><span class="v" style="left:77.5px">0.0 %</span><span class="v" style="left:117.3px">0.0 %</span><span class="v" style="left:156.3px">1.0 %</span><span class="v" style="left:195.9px">0.0 %</span></div><div class="row o" style="top:57.93px"><div class="hl"></div><div class="ic" style="left:9.8px"></div><span class="n" style="left:14.6px">Write Activity</span><span class="v" style="left:77.5px">0.1 %</span><span class="v" style="left:117.3px">0.0 %</span><span class="v" style="left:156.3px">2.1 %</span><span class="v" style="left:195.9px">0.1 %</span></div><div class="row" style="top:63.55px"><div class="hl"></div><div class="ic" style="left:9.8px"></div><span class="n" style="left:14.6px">Total Activity</span><span class="v" style="left:77.5px">0.1 %</span><span class="v" style="left:117.3px">0.0 %</span><span class="v" style="left:156.3px">2.7 %</span><span class="v" style="left:195.9px">0.1 %</span></div><div class="row o" style="top:69.17px"><div class="hl"></div><div class="ic" style="left:9.8px"></div><span class="n" style="left:14.6px">Read Rate</span><span class="v" style="left:77.5px">0.002 MB/s</span><span class="v" style="left:117.3px">0.000 MB/s</span><span class="v" style="left:156.3px">4.040 MB/s</span><span class="v" style="left:195.9px">0.117 MB/s</span></div><div class="row" style="top:74.79px"><div class="hl"></div><div class="ic" style="left:9.8px"></div><span class="n" style="left:14.6px">Write Rate</span><span class="v" style="left:77.5px">0.205 MB/s</span><span class="v" style="left:117.3px">0.000 MB/s</span><span class="v" style="left:156.3px">15.676 MB/s</span><span class="v" style="left:195.9px">0.347 MB/s</span></div><div class="row o" style="top:80.41px"><div class="hl"></div><div class="ic" style="left:9.8px"></div><span class="n" style="left:14.6px">Read Total</span><span class="v" style="left:77.5px">31,890 MB</span><span class="v" style="left:117.3px">31,111 MB</span><span class="v" style="left:156.3px">31,890 MB</span></div><div class="row" style="top:86.03px"><div class="hl"></div><div class="ic" style="left:9.8px"></div><span class="n" style="left:14.6px">Write Total</span><span class="v" style="left:77.5px">30,213 MB</span><span class="v" style="left:117.3px">30,111 MB</span><span class="v" style="left:156.3px">30,213 MB</span></div><div class="row g" style="top:97.27px"><svg style="left:3px;top:1.6px;width:3px;height:2.4px" viewBox="0 0 10 8"><path d="M1 1.5L5 6L9 1.5" fill="none" stroke="#555" stroke-width="1.6"/></svg><div style="left:9.6px;top:0.7px;width:2.6px;height:4.2px;background:#3c3c3c;border-radius:0.4px"></div><span class="n">Drive: ASMT ASM246X (ABCDEF123456) [E:]</span></div><div class="row o" style="top:102.89px"><div class="ic" style="left:9.8px"></div><span class="n" style="left:14.6px">Read Activity</span><span class="v" style="left:77.5px">0.0 %</span><span class="v" style="left:117.3px">0.0 %</span><span class="v" style="left:156.3px">0.0 %</span><span class="v" style="left:195.9px">0.0 %</span></div><div class="row" style="top:108.51px"><div class="ic" style="left:9.8px"></div><span class="n" style="left:14.6px">Write Activity</span><span class="v" style="left:77.5px">0.0 %</span><span class="v" style="left:117.3px">0.0 %</span><span class="v" style="left:156.3px">0.0 %</span><span class="v" style="left:195.9px">0.0 %</span></div><div class="row o" style="top:114.13px"><div class="ic" style="left:9.8px"></div><span class="n" style="left:14.6px">Total Activity</span><span class="v" style="left:77.5px">0.0 %</span><span class="v" style="left:117.3px">0.0 %</span><span class="v" style="left:156.3px">0.0 %</span><span class="v" style="left:195.9px">0.0 %</span></div><div class="row" style="top:119.75px"><div class="ic" style="left:9.8px"></div><span class="n" style="left:14.6px">Read Rate</span><span class="v" style="left:77.5px">0.000 MB/s</span><span class="v" style="left:117.3px">0.000 MB/s</span><span class="v" style="left:156.3px">0.000 MB/s</span><span class="v" style="left:195.9px">0.000 MB/s</span></div><div class="row o" style="top:125.37px"><div class="ic" style="left:9.8px"></div><span class="n" style="left:14.6px">Write Rate</span><span class="v" style="left:77.5px">0.000 MB/s</span><span class="v" style="left:117.3px">0.000 MB/s</span><span class="v" style="left:156.3px">0.000 MB/s</span><span class="v" style="left:195.9px">0.000 MB/s</span></div><div class="row" style="top:130.99px"><div class="ic" style="left:9.8px"></div><span class="n" style="left:14.6px">Read Total</span><span class="v" style="left:77.5px">1,477 MB</span><span class="v" style="left:117.3px">1,477 MB</span><span class="v" style="left:156.3px">1,477 MB</span></div><div class="row o" style="top:136.61px"><div class="ic" style="left:9.8px"></div><span class="n" style="left:14.6px">Write Total</span><span class="v" style="left:77.5px">541 MB</span><span class="v" style="left:117.3px">541 MB</span><span class="v" style="left:156.3px">541 MB</span></div><div class="row g" style="top:147.85px"><svg style="left:3px;top:1.6px;width:3px;height:2.4px" viewBox="0 0 10 8"><path d="M1 1.5L5 6L9 1.5" fill="none" stroke="#555" stroke-width="1.6"/></svg><div style="left:9.6px;top:0.7px;width:2.6px;height:4.2px;background:#3c3c3c;border-radius:0.4px"></div><span class="n">GPU [#0]: Intel Arc B580</span></div><div class="row" style="top:153.47px"><div class="hl"></div><div style="left:10.8px;top:0.7px;width:1px;height:4px;background:#dc8a86;border-radius:0.5px"></div><span class="n" style="left:14.6px">GPU Core Temperature</span><span class="v" style="left:77.5px">54.0 °C</span><span class="v" style="left:117.3px">33.0 °C</span><span class="v" style="left:156.3px">63.0 °C</span><span class="v" style="left:195.9px">50.9 °C</span></div><div class="row o" style="top:159.09px"><div class="hl"></div><div style="left:10.8px;top:0.7px;width:1px;height:4px;background:#dc8a86;border-radius:0.5px"></div><span class="n" style="left:14.6px">GPU VR Temperature</span><span class="v" style="left:77.5px">58.0 °C</span><span class="v" style="left:117.3px">34.0 °C</span><span class="v" style="left:156.3px">64.0 °C</span><span class="v" style="left:195.9px">54.1 °C</span></div><div class="row" style="top:164.71px"><div class="hl"></div><div style="left:10.8px;top:0.7px;width:1px;height:4px;background:#dc8a86;border-radius:0.5px"></div><span class="n" style="left:14.6px">GPU Memory Temperature</span><span class="v" style="left:77.5px">60.0 °C</span><span class="v" style="left:117.3px">42.0 °C</span><span class="v" style="left:156.3px">72.0 °C</span><span class="v" style="left:195.9px">65.7 °C</span></div><div class="row o" style="top:170.33px"><div class="hl"></div><div style="left:10.8px;top:0.6px;width:1px;height:4.4px;background:#e6d684;transform:skewX(-18deg)"></div><span class="n" style="left:14.6px">GPU Core Voltage</span><span class="v" style="left:77.5px">0.765 V</span><span class="v" style="left:117.3px">0.700 V</span><span class="v" style="left:156.3px">1.005 V</span><span class="v" style="left:195.9px">0.861 V</span></div><div class="row" style="top:175.95px"><div class="hl"></div><div style="left:10.8px;top:0.6px;width:1px;height:4.4px;background:#e6d684;transform:skewX(-18deg)"></div><span class="n" style="left:14.6px">GPU Memory Voltage</span><span class="v" style="left:77.5px">1.350 V</span><span class="v" style="left:117.3px">1.350 V</span><span class="v" style="left:156.3px">1.350 V</span><span class="v" style="left:195.9px">1.350 V</span></div><div class="row o" style="top:181.57px"><div class="hl"></div><div style="left:9.6px;top:0.9px;width:3.8px;height:3.8px;background:#222;border-radius:50%"></div><div style="left:10.7px;top:2px;width:1.6px;height:1.6px;background:#ddd;border-radius:50%"></div><span class="n" style="left:14.6px">GPU Fan1</span><span class="v" style="left:77.5px">1,320 RPM</span><span class="v" style="left:117.3px">40 RPM</span><span class="v" style="left:156.3px">1,933 RPM</span><span class="v" style="left:195.9px">1,083 RPM</span></div><div class="row" style="top:187.19px"><div class="hl"></div><div style="left:10.8px;top:0.6px;width:1px;height:4.4px;background:#e6d684;transform:skewX(-18deg)"></div><span class="n" style="left:14.6px">GPU ASIC Power</span><span class="v" style="left:77.5px">23.408 W</span><span class="v" style="left:117.3px">11.275 W</span><span class="v" style="left:156.3px">126.111 W</span><span class="v" style="left:195.9px">72.364 W</span></div><div class="row o" style="top:192.81px"><div class="hl"></div><div class="ic" style="left:9.8px"></div><span class="n" style="left:14.6px">GPU Clock</span><span class="v" style="left:77.5px">400.0 MHz</span><span class="v" style="left:117.3px">400.0 MHz</span><span class="v" style="left:156.3px">2,850.0 MHz</span><span class="v" style="left:195.9px">2,076.3 MHz</span></div><div class="row" style="top:198.43px"><div class="ic" style="left:9.8px"></div><span class="n" style="left:14.6px">GPU Memory Clock</span><span class="v" style="left:77.5px">2,375.0 MHz</span><span class="v" style="left:117.3px">2,375.0 MHz</span><span class="v" style="left:156.3px">2,375.0 MHz</span><span class="v" style="left:195.9px">2,375.0 MHz</span></div><div class="row o" style="top:204.05px"><div class="hl"></div><div class="ic" style="left:9.8px"></div><span class="n" style="left:14.6px">GPU D3D Usage</span><span class="v" style="left:77.5px">1.2 %</span><span class="v" style="left:117.3px">0.0 %</span><span class="v" style="left:156.3px">100.0 %</span><span class="v" style="left:195.9px">61.0 %</span></div><div class="row" style="top:209.67px"><div class="hl"></div><div class="ic" style="left:9.8px"></div><span class="n" style="left:14.6px">GPU Decoding Usage</span><span class="v" style="left:77.5px">1.8 %</span><span class="v" style="left:117.3px">0.0 %</span><span class="v" style="left:156.3px">99.7 %</span><span class="v" style="left:195.9px">60.4 %</span></div><div class="row o" style="top:215.29px"><div class="ic" style="left:9.8px"></div><span class="n" style="left:14.6px">GPU D3D Usages</span><span class="v" style="left:77.5px">0.7 %</span><span class="v" style="left:117.3px">0.0 %</span><span class="v" style="left:156.3px">1.0 %</span><span class="v" style="left:195.9px">0.0 %</span></div><div class="row" style="top:220.91px"><div class="ic" style="left:15.4px"></div><span class="n" style="left:20.2px">GPU Utilizations</span><span class="v" style="left:117.3px">0.0 %</span><span class="v" style="left:156.3px">100.0 %</span></div><div class="row o" style="top:226.53px"><div class="hl"></div><div class="ic" style="left:15.4px"></div><span class="n" style="left:20.2px">GPU 3D Usage</span><span class="v" style="left:77.5px">1.4 %</span><span class="v" style="left:117.3px">0.0 %</span><span class="v" style="left:156.3px">11.0 %</span><span class="v" style="left:195.9px">0.5 %</span></div><div class="row" style="top:232.15px"><div class="ic" style="left:15.4px"></div><span class="n" style="left:20.2px">GPU Media Engine Usage</span><span class="v" style="left:77.5px">0.0 %</span><span class="v" style="left:117.3px">0.0 %</span><span class="v" style="left:156.3px">0.0 %</span><span class="v" style="left:195.9px">0.0 %</span></div><div class="row o" style="top:237.77px"><div class="hl"></div><div class="ic" style="left:15.4px"></div><span class="n" style="left:20.2px">GPU Video Processing Usage</span><span class="v" style="left:77.5px">0.0 %</span><span class="v" style="left:117.3px">0.0 %</span><span class="v" style="left:156.3px">0.5 %</span><span class="v" style="left:195.9px">0.0 %</span></div><div class="row" style="top:243.39px"><div class="hl"></div><div class="ic" style="left:15.4px"></div><span class="n" style="left:20.2px">GPU Compute 0 Usage</span><span class="v" style="left:77.5px">0.0 %</span><span class="v" style="left:117.3px">0.0 %</span><span class="v" style="left:156.3px">100.0 %</span><span class="v" style="left:195.9px">58.0 %</span></div><div class="row o" style="top:249.01px"><div class="hl"></div><div class="ic" style="left:15.4px"></div><span class="n" style="left:20.2px">GPU Copy Engine Usage</span><span class="v" style="left:77.5px">0.0 %</span><span class="v" style="left:117.3px">0.0 %</span><span class="v" style="left:156.3px">17.5 %</span><span class="v" style="left:195.9px">10.7 %</span></div><div class="row" style="top:254.63px"><div class="hl"></div><div class="ic" style="left:9.8px"></div><span class="n" style="left:14.6px">GPU Memory Usage</span><span class="v" style="left:77.5px">82.0 %</span><span class="v" style="left:117.3px">10.0 %</span><span class="v" style="left:156.3px">97.8 %</span><span class="v" style="left:195.9px">91.0 %</span></div><div class="row o" style="top:260.25px"><div class="hl"></div><div class="ic" style="left:9.8px"></div><span class="n" style="left:14.6px">GPU Memory Allocated</span><span class="v" style="left:77.5px">10,075 MB</span><span class="v" style="left:117.3px">1,271 MB</span><span class="v" style="left:156.3px">12,009 MB</span><span class="v" style="left:195.9px">11,175 MB</span></div><div class="row" style="top:265.87px"><div class="hl"></div><div class="ic" style="left:9.8px"></div><span class="n" style="left:14.6px">GPU Memory Available</span><span class="v" style="left:77.5px">2,205 MB</span><span class="v" style="left:117.3px">270 MB</span><span class="v" style="left:156.3px">11,008 MB</span><span class="v" style="left:195.9px">1,111 MB</span></div><div class="row o" style="top:271.49px"><div class="hl"></div><div class="ic" style="left:9.8px"></div><span class="n" style="left:14.6px">GPU D3D Memory Dedicated</span><span class="v" style="left:77.5px">10,075 MB</span><span class="v" style="left:117.3px">1,271 MB</span><span class="v" style="left:156.3px">12,009 MB</span><span class="v" style="left:195.9px">11,176 MB</span></div><div class="row" style="top:277.11px"><div class="hl"></div><div class="ic" style="left:9.8px"></div><span class="n" style="left:14.6px">GPU D3D Memory Dynamic</span><span class="v" style="left:77.5px">212 MB</span><span class="v" style="left:117.3px">84 MB</span><span class="v" style="left:156.3px">3,308 MB</span><span class="v" style="left:195.9px">521 MB</span></div><div class="row o" style="top:282.73px"><div class="ic" style="left:9.8px"></div><span class="n" style="left:14.6px">PCIe Link Speed</span><span class="v" style="left:77.5px">16.0 GT/s</span><span class="v" style="left:117.3px">16.0 GT/s</span><span class="v" style="left:156.3px">16.0 GT/s</span><span class="v" style="left:195.9px">16.0 GT/s</span></div><div class="row" style="top:288.35px"><div class="hl"></div><div class="ic" style="left:15.4px"></div><span class="n" style="left:20.2px">GPU Thermal Throttle Reasons</span><span class="v" style="left:77.5px">No</span><span class="v" style="left:117.3px">No</span><span class="v" style="left:156.3px">No</span><span class="v" style="left:195.9px">No</span></div><div class="row o" style="top:293.97px"><div class="hl"></div><div class="ic" style="left:15.4px"></div><span class="n" style="left:20.2px">Power Throttle Reasons</span><span class="v" style="left:77.5px">No</span><span class="v" style="left:117.3px">No</span><span class="v" style="left:156.3px">Yes</span><span class="v" style="left:195.9px">No</span></div><div class="row g" style="top:305.21px"><svg style="left:3px;top:1.6px;width:3px;height:2.4px" viewBox="0 0 10 8"><path d="M1 1.5L5 6L9 1.5" fill="none" stroke="#555" stroke-width="1.6"/></svg><div style="left:9.6px;top:0.7px;width:2.6px;height:4.2px;background:#3c3c3c;border-radius:0.4px"></div><span class="n">PSU: MSI MEG Ai1300P</span></div><div class="row" style="top:310.83px"><div class="hl"></div><div style="left:10.8px;top:0.7px;width:1px;height:4px;background:#dc8a86;border-radius:0.5px"></div><span class="n" style="left:14.6px">PSU Temperature</span><span class="v" style="left:77.5px">48.0 °C</span><span class="v" style="left:117.3px">48.0 °C</span><span class="v" style="left:156.3px">48.0 °C</span><span class="v" style="left:195.9px">48.0 °C</span></div><div class="row o" style="top:316.45px"><div class="hl"></div><div style="left:10.8px;top:0.6px;width:1px;height:4.4px;background:#e6d684;transform:skewX(-18deg)"></div><span class="n" style="left:14.6px">+3.3V</span><span class="v" style="left:77.5px">3.400 V</span><span class="v" style="left:117.3px">3.400 V</span><span class="v" style="left:156.3px">3.400 V</span><span class="v" style="left:195.9px">3.400 V</span></div><div class="row" style="top:322.07px"><div class="hl"></div><div style="left:10.8px;top:0.6px;width:1px;height:4.4px;background:#e6d684;transform:skewX(-18deg)"></div><span class="n" style="left:14.6px">+5V</span><span class="v" style="left:77.5px">5.000 V</span><span class="v" style="left:117.3px">5.000 V</span><span class="v" style="left:156.3px">5.050 V</span><span class="v" style="left:195.9px">5.001 V</span></div><div class="row o" style="top:327.69px"><div class="hl"></div><div style="left:10.8px;top:0.6px;width:1px;height:4.4px;background:#e6d684;transform:skewX(-18deg)"></div><span class="n" style="left:14.6px">+12V</span><span class="v" style="left:77.5px">12.094 V</span><span class="v" style="left:117.3px">12.063 V</span><span class="v" style="left:156.3px">12.125 V</span><span class="v" style="left:195.9px">12.094 V</span></div><div class="row" style="top:333.31px"><div class="hl"></div><div style="left:10.8px;top:0.6px;width:1px;height:4.4px;background:#e6d684;transform:skewX(-18deg)"></div><span class="n" style="left:14.6px">+12V1</span><span class="v" style="left:77.5px">12.063 V</span><span class="v" style="left:117.3px">12.063 V</span><span class="v" style="left:156.3px">12.125 V</span><span class="v" style="left:195.9px">12.094 V</span></div><div class="row o" style="top:338.93px"><div class="hl"></div><div style="left:10.8px;top:0.6px;width:1px;height:4.4px;background:#e6d684;transform:skewX(-18deg)"></div><span class="n" style="left:14.6px">+12V2</span><span class="v" style="left:77.5px">12.063 V</span><span class="v" style="left:117.3px">12.063 V</span><span class="v" style="left:156.3px">12.094 V</span><span class="v" style="left:195.9px">12.063 V</span></div><div class="row" style="top:344.55px"><div class="hl"></div><div style="left:10.8px;top:0.6px;width:1px;height:4.4px;background:#e6d684;transform:skewX(-18deg)"></div><span class="n" style="left:14.6px">+12V3</span><span class="v" style="left:77.5px">12.094 V</span><span class="v" style="left:117.3px">12.063 V</span><span class="v" style="left:156.3px">12.125 V</span><span class="v" style="left:195.9px">12.094 V</span></div><div class="row o" style="top:350.17px"><div class="hl"></div><div style="left:10.8px;top:0.6px;width:1px;height:4.4px;background:#e6d684;transform:skewX(-18deg)"></div><span class="n" style="left:14.6px">+12V4</span><span class="v" style="left:77.5px">12.063 V</span><span class="v" style="left:117.3px">12.063 V</span><span class="v" style="left:156.3px">12.094 V</span><span class="v" style="left:195.9px">12.063 V</span></div><div class="row" style="top:355.79px"><div class="hl"></div><div style="left:10.8px;top:0.6px;width:1px;height:4.4px;background:#e6d684;transform:skewX(-18deg)"></div><span class="n" style="left:14.6px">+12V5</span><span class="v" style="left:77.5px">12.094 V</span><span class="v" style="left:117.3px">12.063 V</span><span class="v" style="left:156.3px">12.125 V</span><span class="v" style="left:195.9px">12.094 V</span></div><div class="row o" style="top:361.41px"><div style="left:9.6px;top:0.9px;width:3.8px;height:3.8px;background:#222;border-radius:50%"></div><div style="left:10.7px;top:2px;width:1.6px;height:1.6px;background:#ddd;border-radius:50%"></div><span class="n" style="left:14.6px">Fan</span><span class="v" style="left:77.5px">0 RPM</span><span class="v" style="left:117.3px">0 RPM</span><span class="v" style="left:156.3px">0 RPM</span><span class="v" style="left:195.9px">0 RPM</span></div><div class="row" style="top:367.03px"><div class="hl"></div><div style="left:10.8px;top:0.6px;width:1px;height:4.4px;background:#e6d684;transform:skewX(-18deg)"></div><span class="n" style="left:14.6px">+3.3V Current</span><span class="v" style="left:77.5px">3.000 A</span><span class="v" style="left:117.3px">3.000 A</span><span class="v" style="left:156.3px">3.500 A</span><span class="v" style="left:195.9px">3.050 A</span></div><div class="row o" style="top:372.65px"><div class="hl"></div><div style="left:10.8px;top:0.6px;width:1px;height:4.4px;background:#e6d684;transform:skewX(-18deg)"></div><span class="n" style="left:14.6px">+5V Current</span><span class="v" style="left:77.5px">3.313 A</span><span class="v" style="left:117.3px">3.250 A</span><span class="v" style="left:156.3px">5.063 A</span><span class="v" style="left:195.9px">3.405 A</span></div><div class="row" style="top:378.27px"><div class="hl"></div><div style="left:10.8px;top:0.6px;width:1px;height:4.4px;background:#e6d684;transform:skewX(-18deg)"></div><span class="n" style="left:14.6px">+12V Current</span><span class="v" style="left:77.5px">7.750 A</span><span class="v" style="left:117.3px">7.375 A</span><span class="v" style="left:156.3px">24.000 A</span><span class="v" style="left:195.9px">17.107 A</span></div><div class="row o" style="top:383.89px"><div class="hl"></div><div style="left:10.8px;top:0.6px;width:1px;height:4.4px;background:#e6d684;transform:skewX(-18deg)"></div><span class="n" style="left:14.6px">+12V1 Current</span><span class="v" style="left:77.5px">3.000 A</span><span class="v" style="left:117.3px">3.000 A</span><span class="v" style="left:156.3px">3.500 A</span><span class="v" style="left:195.9px">3.230 A</span></div><div class="row" style="top:389.51px"><div class="hl"></div><div style="left:10.8px;top:0.6px;width:1px;height:4.4px;background:#e6d684;transform:skewX(-18deg)"></div><span class="n" style="left:14.6px">+12V2 Current</span><span class="v" style="left:77.5px">4.250 A</span><span class="v" style="left:117.3px">1.750 A</span><span class="v" style="left:156.3px">11.000 A</span><span class="v" style="left:195.9px">6.100 A</span></div><div class="row o" style="top:395.13px"><div class="hl"></div><div style="left:10.8px;top:0.6px;width:1px;height:4.4px;background:#e6d684;transform:skewX(-18deg)"></div><span class="n" style="left:14.6px">+12V3 Current</span><span class="v" style="left:77.5px">1.500 A</span><span class="v" style="left:117.3px">1.375 A</span><span class="v" style="left:156.3px">3.500 A</span><span class="v" style="left:195.9px">2.750 A</span></div><div class="row" style="top:400.75px"><div class="hl"></div><div style="left:10.8px;top:0.6px;width:1px;height:4.4px;background:#e6d684;transform:skewX(-18deg)"></div><span class="n" style="left:14.6px">+12V4 Current</span><span class="v" style="left:77.5px">2.750 A</span><span class="v" style="left:117.3px">2.750 A</span><span class="v" style="left:156.3px">3.250 A</span><span class="v" style="left:195.9px">2.750 A</span></div><div class="row o" style="top:406.37px"><div class="hl"></div><div style="left:10.8px;top:0.6px;width:1px;height:4.4px;background:#e6d684;transform:skewX(-18deg)"></div><span class="n" style="left:14.6px">+12V5 Current</span><span class="v" style="left:77.5px">0.750 A</span><span class="v" style="left:117.3px">0.750 A</span><span class="v" style="left:156.3px">9.750 A</span><span class="v" style="left:195.9px">5.250 A</span></div><div class="row" style="top:411.99px"><div class="hl"></div><div style="left:10.8px;top:0.6px;width:1px;height:4.4px;background:#e6d684;transform:skewX(-18deg)"></div><span class="n" style="left:14.6px">+3.3V Power</span><span class="v" style="left:77.5px">9.000 W</span><span class="v" style="left:117.3px">9.000 W</span><span class="v" style="left:156.3px">10.313 W</span><span class="v" style="left:195.9px">10.180 W</span></div><div class="row o" style="top:417.61px"><div class="hl"></div><div style="left:10.8px;top:0.6px;width:1px;height:4.4px;background:#e6d684;transform:skewX(-18deg)"></div><span class="n" style="left:14.6px">+5V Power</span><span class="v" style="left:77.5px">16.438 W</span><span class="v" style="left:117.3px">16.000 W</span><span class="v" style="left:156.3px">25.313 W</span><span class="v" style="left:195.9px">17.505 W</span></div><div class="row" style="top:423.23px"><div class="hl"></div><div style="left:10.8px;top:0.6px;width:1px;height:4.4px;background:#e6d684;transform:skewX(-18deg)"></div><span class="n" style="left:14.6px">+12V Power</span><span class="v" style="left:77.5px">93.500 W</span><span class="v" style="left:117.3px">88.875 W</span><span class="v" style="left:156.3px">290.500 W</span><span class="v" style="left:195.9px">206.700 W</span></div><div class="row o" style="top:428.85px"><div class="hl"></div><div style="left:10.8px;top:0.6px;width:1px;height:4.4px;background:#e6d684;transform:skewX(-18deg)"></div><span class="n" style="left:14.6px">+12V1 Power</span><span class="v" style="left:77.5px">36.000 W</span><span class="v" style="left:117.3px">36.000 W</span><span class="v" style="left:156.3px">42.438 W</span><span class="v" style="left:195.9px">39.050 W</span></div><div class="row" style="top:434.47px"><div class="hl"></div><div style="left:10.8px;top:0.6px;width:1px;height:4.4px;background:#e6d684;transform:skewX(-18deg)"></div><span class="n" style="left:14.6px">+12V2 Power</span><span class="v" style="left:77.5px">51.250 W</span><span class="v" style="left:117.3px">21.125 W</span><span class="v" style="left:156.3px">132.000 W</span><span class="v" style="left:195.9px">73.600 W</span></div><div class="row o" style="top:440.09px"><div class="hl"></div><div style="left:10.8px;top:0.6px;width:1px;height:4.4px;background:#e6d684;transform:skewX(-18deg)"></div><span class="n" style="left:14.6px">+12V3 Power</span><span class="v" style="left:77.5px">18.063 W</span><span class="v" style="left:117.3px">16.500 W</span><span class="v" style="left:156.3px">127.000 W</span><span class="v" style="left:195.9px">74.000 W</span></div><div class="row" style="top:445.71px"><div class="hl"></div><div style="left:10.8px;top:0.6px;width:1px;height:4.4px;background:#e6d684;transform:skewX(-18deg)"></div><span class="n" style="left:14.6px">+12V4 Power</span><span class="v" style="left:77.5px">33.125 W</span><span class="v" style="left:117.3px">33.000 W</span><span class="v" style="left:156.3px">39.000 W</span><span class="v" style="left:195.9px">33.400 W</span></div><div class="row o" style="top:451.33px"><div class="hl"></div><div style="left:10.8px;top:0.6px;width:1px;height:4.4px;background:#e6d684;transform:skewX(-18deg)"></div><span class="n" style="left:14.6px">+12V5 Power</span><span class="v" style="left:77.5px">9.000 W</span><span class="v" style="left:117.3px">9.000 W</span><span class="v" style="left:156.3px">9.063 W</span><span class="v" style="left:195.9px">9.063 W</span></div><div class="row" style="top:456.95px"><div class="hl"></div><div style="left:10.8px;top:0.6px;width:1px;height:4.4px;background:#e6d684;transform:skewX(-18deg)"></div><span class="n" style="left:14.6px">PSU Power (sum)</span><span class="v" style="left:77.5px">145.375 W</span><span class="v" style="left:117.3px">141.375 W</span><span class="v" style="left:156.3px">332.500 W</span><span class="v" style="left:195.9px">234.750 W</span></div><div class="row o" style="top:462.57px"><div class="hl"></div><div style="left:10.8px;top:0.6px;width:1px;height:4.4px;background:#e6d684;transform:skewX(-18deg)"></div><span class="n" style="left:14.6px">PSU Power (out)</span><span class="v" style="left:77.5px">143.000 W</span><span class="v" style="left:117.3px">142.000 W</span><span class="v" style="left:156.3px">330.000 W</span><span class="v" style="left:195.9px">233.114 W</span></div><div class="row" style="top:468.19px"><div class="hl"></div><div class="ic" style="left:9.8px"></div><span class="n" style="left:14.6px">PSU Efficiency</span><span class="v" style="left:77.5px">88.5 %</span><span class="v" style="left:117.3px">88.0 %</span><span class="v" style="left:156.3px">91.8 %</span><span class="v" style="left:195.9px">91.0 %</span></div><div class="row o" style="top:473.81px"><div class="hl"></div><div class="ic" style="left:9.8px"></div><span class="n" style="left:14.6px">PSU Runtime</span><span class="v" style="left:77.5px">7,886 h</span><span class="v" style="left:117.3px">7,886 h</span><span class="v" style="left:156.3px">7,886 h</span><span class="v" style="left:195.9px">7,886 h</span></div><div class="row g" style="top:485.05px"><svg style="left:3px;top:1.6px;width:3px;height:2.4px" viewBox="0 0 10 8"><path d="M1 1.5L5 6L9 1.5" fill="none" stroke="#555" stroke-width="1.6"/></svg><div style="left:9.6px;top:0.7px;width:2.6px;height:4.2px;background:#3c3c3c;border-radius:0.4px"></div><span class="n">PresentMon (Stable Diffusion - Mozilla Firefox.exe)</span></div><div class="row" style="top:490.67px"><div class="hl"></div><div class="ic" style="left:9.8px"></div><span class="n" style="left:14.6px">Framerate (Presented)</span><span class="v" style="left:77.5px">0.0 FPS</span><span class="v" style="left:117.3px">0.0 FPS</span><span class="v" style="left:156.3px">0.0 FPS</span><span class="v" style="left:195.9px">0.0 FPS</span></div><div class="row o" style="top:496.29px"><div class="hl"></div><div class="ic" style="left:9.8px"></div><span class="n" style="left:14.6px">Framerate (Displayed)</span><span class="v" style="left:77.5px">0.7 FPS</span><span class="v" style="left:117.3px">0.7 FPS</span><span class="v" style="left:156.3px">144.1 FPS</span><span class="v" style="left:195.9px">30.8 FPS</span></div><div class="row" style="top:501.91px"><div class="hl"></div><div class="ic" style="left:9.8px"></div><span class="n" style="left:14.6px">Frame Time</span><span class="v" style="left:77.5px">0.00 ms</span><span class="v" style="left:117.3px">0.00 ms</span><span class="v" style="left:156.3px">0.00 ms</span><span class="v" style="left:195.9px">14.32 ms</span></div><div class="row o" style="top:507.53px"><div class="hl"></div><div class="ic" style="left:9.8px"></div><span class="n" style="left:14.6px">GPU Busy</span><span class="v" style="left:77.5px">0.76 ms</span><span class="v" style="left:117.3px">0.00 ms</span><span class="v" style="left:156.3px">5.11 ms</span><span class="v" style="left:195.9px">1.50 ms</span></div><div class="row" style="top:513.15px"><div class="hl"></div><div class="ic" style="left:9.8px"></div><span class="n" style="left:14.6px">GPU Wait</span><span class="v" style="left:77.5px">0.00 ms</span><span class="v" style="left:117.3px">0.00 ms</span><span class="v" style="left:156.3px">98.11 ms</span><span class="v" style="left:195.9px">41.77 ms</span></div><div class="row o" style="top:518.77px"><div class="hl"></div><div class="ic" style="left:9.8px"></div><span class="n" style="left:14.6px">CPU Busy</span><span class="v" style="left:77.5px">0.00 ms</span><span class="v" style="left:117.3px">0.00 ms</span><span class="v" style="left:156.3px">97.90 ms</span><span class="v" style="left:195.9px">12.83 ms</span></div><div class="row" style="top:524.39px"><div class="hl"></div><div class="ic" style="left:9.8px"></div><span class="n" style="left:14.6px">CPU Wait</span><span class="v" style="left:77.5px">0.07 ms</span><span class="v" style="left:117.3px">0.00 ms</span><span class="v" style="left:156.3px">5.17 ms</span><span class="v" style="left:195.9px">1.30 ms</span></div><div class="row g" style="top:535.63px"><svg style="left:3px;top:1.6px;width:3px;height:2.4px" viewBox="0 0 10 8"><path d="M1 1.5L5 6L9 1.5" fill="none" stroke="#555" stroke-width="1.6"/></svg><div style="left:9.6px;top:0.7px;width:2.6px;height:4.2px;background:#3c3c3c;border-radius:0.4px"></div><span class="n">Network: Microsoft Wi-Fi Direct Virtual Adapter (Wireless Network Adapter) - WLAN 11</span></div><div class="row o" style="top:541.25px"><div class="ic" style="left:9.8px"></div><span class="n" style="left:14.6px">Total DL</span><span class="v" style="left:77.5px">0 MB</span><span class="v" style="left:117.3px">0 MB</span><span class="v" style="left:156.3px">0 MB</span></div><div class="row" style="top:546.87px"><div class="ic" style="left:9.8px"></div><span class="n" style="left:14.6px">Total UP</span><span class="v" style="left:77.5px">0 MB</span><span class="v" style="left:117.3px">0 MB</span><span class="v" style="left:156.3px">0 MB</span></div><div class="row o" style="top:552.49px"><div class="ic" style="left:9.8px"></div><span class="n" style="left:14.6px">Current DL rate</span><span class="v" style="left:77.5px">0.0 KB/s</span><span class="v" style="left:117.3px">0.0 KB/s</span><span class="v" style="left:156.3px">0.0 KB/s</span><span class="v" style="left:195.9px">0.0 KB/s</span></div><div class="row" style="top:558.11px"><div class="ic" style="left:9.8px"></div><span class="n" style="left:14.6px">Current UP rate</span><span class="v" style="left:77.5px">0.0 KB/s</span><span class="v" style="left:117.3px">0.0 KB/s</span><span class="v" style="left:156.3px">0.0 KB/s</span><span class="v" style="left:195.9px">0.0 KB/s</span></div><div class="row g" style="top:569.35px"><svg style="left:3px;top:1.6px;width:3px;height:2.4px" viewBox="0 0 10 8"><path d="M1 1.5L5 6L9 1.5" fill="none" stroke="#555" stroke-width="1.6"/></svg><div style="left:9.6px;top:0.7px;width:2.6px;height:4.2px;background:#3c3c3c;border-radius:0.4px"></div><span class="n">Network: Qualcomm FastConnect 7800 Wi-Fi 7 High Band Simultaneous (HBS) Network Adapter - WLAN 10</span></div><div class="row o" style="top:574.97px"><div class="ic" style="left:9.8px"></div><span class="n" style="left:14.6px">Total DL</span><span class="v" style="left:77.5px">0 MB</span><span class="v" style="left:117.3px">0 MB</span><span class="v" style="left:156.3px">0 MB</span></div><div class="row" style="top:580.59px"><div class="ic" style="left:9.8px"></div><span class="n" style="left:14.6px">Total UP</span><span class="v" style="left:77.5px">0 MB</span><span class="v" style="left:117.3px">0 MB</span><span class="v" style="left:156.3px">0 MB</span></div><div class="row o" style="top:586.21px"><div class="ic" style="left:9.8px"></div><span class="n" style="left:14.6px">Current DL rate</span><span class="v" style="left:77.5px">0.0 KB/s</span><span class="v" style="left:117.3px">0.0 KB/s</span><span class="v" style="left:156.3px">0.0 KB/s</span><span class="v" style="left:195.9px">0.0 KB/s</span></div><div class="row" style="top:591.83px"><div class="ic" style="left:9.8px"></div><span class="n" style="left:14.6px">Current UP rate</span><span class="v" style="left:77.5px">0.0 KB/s</span><span class="v" style="left:117.3px">0.0 KB/s</span><span class="v" style="left:156.3px">0.0 KB/s</span><span class="v" style="left:195.9px">0.0 KB/s</span></div><div class="row g" style="top:603.07px"><svg style="left:3px;top:1.6px;width:3px;height:2.4px" viewBox="0 0 10 8"><path d="M1 1.5L5 6L9 1.5" fill="none" stroke="#555" stroke-width="1.6"/></svg><div style="left:9.6px;top:0.7px;width:2.6px;height:4.2px;background:#3c3c3c;border-radius:0.4px"></div><span class="n">Network: Qualcomm FastConnect 7800 Wi-Fi 7 High Band Simultaneous (HBS) Network Adapter - WLAN 9</span></div><div class="row o" style="top:608.69px"><div class="ic" style="left:9.8px"></div><span class="n" style="left:14.6px">Total DL</span><span class="v" style="left:77.5px">0 MB</span><span class="v" style="left:117.3px">0 MB</span><span class="v" style="left:156.3px">0 MB</span></div><div class="row" style="top:614.31px"><div class="ic" style="left:9.8px"></div><span class="n" style="left:14.6px">Total UP</span><span class="v" style="left:77.5px">0 MB</span><span class="v" style="left:117.3px">0 MB</span><span class="v" style="left:156.3px">0 MB</span></div><div class="row o" style="top:619.93px"><div class="ic" style="left:9.8px"></div><span class="n" style="left:14.6px">Current DL rate</span><span class="v" style="left:77.5px">0.0 KB/s</span><span class="v" style="left:117.3px">0.0 KB/s</span><span class="v" style="left:156.3px">0.0 KB/s</span><span class="v" style="left:195.9px">0.0 KB/s</span></div><div class="row" style="top:625.55px"><div class="ic" style="left:9.8px"></div><span class="n" style="left:14.6px">Current UP rate</span><span class="v" style="left:77.5px">0.0 KB/s</span><span class="v" style="left:117.3px">0.0 KB/s</span><span class="v" style="left:156.3px">0.0 KB/s</span><span class="v" style="left:195.9px">0.0 KB/s</span></div><div class="row g" style="top:636.79px"><svg style="left:3px;top:1.6px;width:3px;height:2.4px" viewBox="0 0 10 8"><path d="M1 1.5L5 6L9 1.5" fill="none" stroke="#555" stroke-width="1.6"/></svg><div style="left:9.6px;top:0.7px;width:2.6px;height:4.2px;background:#3c3c3c;border-radius:0.4px"></div><span class="n">Network: Qualcomm FastConnect 7800 Wi-Fi 7 High Band Simultaneous (HBS) Network Adapter - WLAN 5</span></div><div class="row o" style="top:642.41px"><div class="ic" style="left:9.8px"></div><span class="n" style="left:14.6px">Total DL</span><span class="v" style="left:77.5px">0 MB</span><span class="v" style="left:117.3px">0 MB</span><span class="v" style="left:156.3px">0 MB</span></div><div class="row" style="top:648.03px"><div class="ic" style="left:9.8px"></div><span class="n" style="left:14.6px">Total UP</span><span class="v" style="left:77.5px">0 MB</span><span class="v" style="left:117.3px">0 MB</span><span class="v" style="left:156.3px">0 MB</span></div><div class="row o" style="top:653.65px"><div class="ic" style="left:9.8px"></div><span class="n" style="left:14.6px">Current DL rate</span><span class="v" style="left:77.5px">0.0 KB/s</span><span class="v" style="left:117.3px">0.0 KB/s</span><span class="v" style="left:156.3px">0.0 KB/s</span><span class="v" style="left:195.9px">0.0 KB/s</span></div><div class="row" style="top:659.27px"><div class="ic" style="left:9.8px"></div><span class="n" style="left:14.6px">Current UP rate</span><span class="v" style="left:77.5px">0.0 KB/s</span><span class="v" style="left:117.3px">0.0 KB/s</span><span class="v" style="left:156.3px">0.0 KB/s</span><span class="v" style="left:195.9px">0.0 KB/s</span></div><div class="row g" style="top:670.51px"><svg style="left:3px;top:1.6px;width:3px;height:2.4px" viewBox="0 0 10 8"><path d="M1 1.5L5 6L9 1.5" fill="none" stroke="#555" stroke-width="1.6"/></svg><div style="left:9.6px;top:0.7px;width:2.6px;height:4.2px;background:#3c3c3c;border-radius:0.4px"></div><span class="n">Network: Qualcomm FastConnect 7800 Wi-Fi 7 High Band Simultaneous (HBS) Network Adapter - WLAN 2</span></div><div class="row o" style="top:676.13px"><div class="ic" style="left:9.8px"></div><span class="n" style="left:14.6px">Total DL</span><span class="v" style="left:77.5px">0 MB</span><span class="v" style="left:117.3px">0 MB</span><span class="v" style="left:156.3px">0 MB</span></div></div><div style="left:239.6px;top:10px;width:12px;height:668px;background:#fbfbfb"></div><div style="left:1.2px;top:678px;width:250.3px;height:19px;background:#f0f0f0;border-top:0.5px solid #bdbdbd"></div><svg style="left:4.0px;top:684px;width:10.4px;height:5.6px;opacity:1" viewBox="0 0 20 10"><path d="M0.5 5L5 1V3.4H9V6.6H5V9Z" fill="#2f6fb5"/><path d="M19.5 5L15 1V3.4H11V6.6H15V9Z" fill="#2f6fb5"/></svg><svg style="left:18.0px;top:684px;width:10.4px;height:5.6px;opacity:0.7" viewBox="0 0 20 10"><path d="M0.5 5L5 1V3.4H9V6.6H5V9Z" fill="#7aa7d6"/><path d="M19.5 5L15 1V3.4H11V6.6H15V9Z" fill="#7aa7d6"/></svg><svg style="left:150px;top:681.6px;width:10px;height:10px" viewBox="0 0 10 10"><rect x="0.6" y="1" width="4.6" height="3.6" fill="#3b78c0"/><rect x="4.8" y="5.4" width="4.6" height="3.6" fill="#3b78c0"/><path d="M3 4.6V7H4.8M7 5.4V3H5.2" fill="none" stroke="#2a5a96" stroke-width="0.7"/></svg><span class="t" style="left:176.6px;top:684.6px;font-size:4px;color:#222">1:08:07</span><svg style="left:190.6px;top:681.6px;width:10.4px;height:10.4px" viewBox="0 0 10 10"><circle cx="5" cy="5" r="4.2" fill="#fff" stroke="#555" stroke-width="0.7"/><path d="M5 2.4V5.2H7.2" fill="none" stroke="#333" stroke-width="0.7"/></svg><svg style="left:206px;top:681.6px;width:9.4px;height:10.4px" viewBox="0 0 10 10"><path d="M1.4 0.8h5l2 2v6.4h-7z" fill="#fbfbf4" stroke="#c9c9a8" stroke-width="0.6"/><path d="M4.6 6.4h4M7.4 5l1.6 1.4L7.4 7.8" fill="none" stroke="#c8c080" stroke-width="0.8"/></svg><svg style="left:220px;top:681.6px;width:10.4px;height:10.4px" viewBox="0 0 10 10"><circle cx="5" cy="5" r="2.8" fill="none" stroke="#9a9a9a" stroke-width="1.7" stroke-dasharray="1.5 0.9"/><circle cx="5" cy="5" r="2" fill="none" stroke="#9a9a9a" stroke-width="1"/></svg><svg style="left:235.6px;top:682px;width:9.4px;height:9.4px" viewBox="0 0 10 10"><path d="M1.6 1.6L8.4 8.4M8.4 1.6L1.6 8.4" stroke="#3b80ad" stroke-width="2.2"/></svg><span class="t" style="left:198px;top:672.6px;font-size:9.6px;font-weight:bold;font-style:italic;color:#555;opacity:0.13;-webkit-text-stroke:0">PConline</span></div><div style="left:1263.8px;top:0;width:3.2px;height:697px;background:linear-gradient(#3c4a24,#2a3517 40%,#343d1c 80%,#20280f)"></div></div></body></html>
